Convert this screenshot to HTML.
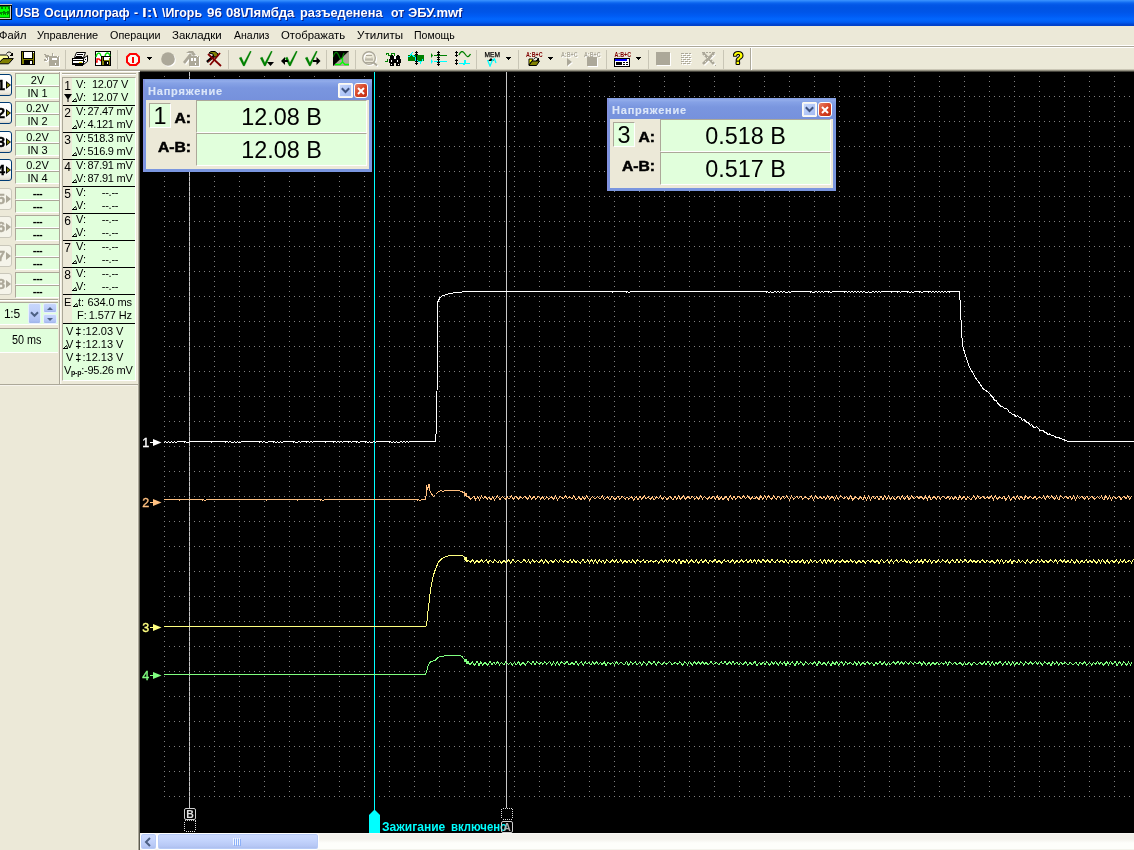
<!DOCTYPE html>
<html lang="ru"><head><meta charset="utf-8"><title>USB Осциллограф</title>
<style>

html,body{margin:0;padding:0}
body{width:1134px;height:850px;position:relative;overflow:hidden;background:#ECE9D8;
 font-family:"Liberation Sans",sans-serif;font-size:11px;color:#000;line-height:13px}
div,span,svg{box-sizing:border-box}
.a{position:absolute}
#root{position:absolute;left:0;top:0;width:1134px;height:850px;overflow:hidden;will-change:transform}
#title{position:absolute;left:0;top:0;width:1134px;height:26px;
 background:linear-gradient(to bottom,#3d95ff 0px,#2b86fb 1px,#0b64ee 3px,#0256e6 5px,#0054e3 8px,#0055e8 12px,#005cf4 16px,#0266fd 19px,#0262f8 21px,#0057ea 23px,#0046d4 24px,#0040c6 26px)}
#appicon{position:absolute;left:0;top:4px;width:12px;height:16px}
#titletext{position:absolute;left:15px;top:5px;height:16px;line-height:16px;font-size:13.5px;font-weight:bold;color:#fff;white-space:nowrap;
 text-shadow:1px 1px 0 #0a1f83;letter-spacing:-0.16px;transform-origin:0 0}
#menu{position:absolute;left:0;top:26px;width:1134px;height:19px;background:#ECE9D8}
.mi{position:absolute;top:2px;height:14px;line-height:14px;font-size:11px;white-space:nowrap;display:inline-block;transform-origin:0 0}
#tbline1{position:absolute;left:0;top:45px;width:1134px;height:1px;background:#fff}
#tbline2{position:absolute;left:0;top:46px;width:1134px;height:1px;background:#aca899}
#toolbar{position:absolute;left:0;top:47px;width:1134px;height:25px;background:#ECE9D8}
#tbshadow{position:absolute;left:0;top:69px;width:1134px;height:3px;background:linear-gradient(to bottom,#e0dccb 0,#b5b1a0 1px,#6e6c5f 2px,#1c1b18 3px)}
.sep{position:absolute;top:3px;width:1px;height:19px;background:#c5c2b2}
.ic{position:absolute;top:4px;width:16px;height:16px}
.dd{position:absolute;top:10px;width:5px;height:3px}

.tw{position:absolute;top:5px;height:16px;line-height:16px;font-size:13.5px;font-weight:bold;color:#fff;white-space:pre;text-shadow:1px 1px 0 #0a1f83;transform-origin:0 0}

</style></head>
<body>
<div id="root">

<div id="title"><div id="appicon"><svg width="12" height="16" viewBox="0 0 12 16" shape-rendering="crispEdges">
<rect x="0" y="0" width="12" height="1" fill="#c8c4b4"/><rect x="0" y="1" width="11" height="14" fill="#008000"/>
<rect x="10" y="2" width="1" height="12" fill="#d4d0c8"/><rect x="0" y="14" width="11" height="1" fill="#d4d0c8"/>
<rect x="11" y="1" width="1" height="15" fill="#000"/><rect x="0" y="15" width="12" height="1" fill="#000"/>
<rect x="0" y="1" width="11" height="1" fill="#000"/>
<rect x="0" y="5" width="9" height="2" fill="#00ff00"/><rect x="0" y="3" width="1" height="2" fill="#00ff00"/><rect x="3" y="3" width="2" height="2" fill="#00ff00"/><rect x="6" y="3" width="2" height="2" fill="#00ff00"/>
<rect x="0" y="7" width="3" height="1" fill="#00ff00"/><rect x="5" y="7" width="2" height="1" fill="#00ff00"/>
<rect x="0" y="11" width="9" height="2" fill="#00ff00"/>
<rect x="0" y="10" width="1" height="1" fill="#00ff00"/><rect x="2" y="9" width="1" height="2" fill="#00ff00"/><rect x="4" y="10" width="1" height="1" fill="#00ff00"/><rect x="6" y="9" width="1" height="2" fill="#00ff00"/><rect x="8" y="10" width="1" height="1" fill="#00ff00"/>
</svg></div><span class="tw" style="left:15.04px;transform:scaleX(0.863)">USB</span><span class="tw" style="left:43.98px;transform:scaleX(0.9207)">Осциллограф</span><span class="tw" style="left:133.88px;transform:scaleX(0.925)">-</span><span class="tw" style="left:142.23px;transform:scaleX(1.2727)">I:\</span><span class="tw" style="left:161.7px;transform:scaleX(0.9159)">\Игорь</span><span class="tw" style="left:207.11px;transform:scaleX(0.9857)">96</span><span class="tw" style="left:225.62px;transform:scaleX(0.9771)">08\Лямбда</span><span class="tw" style="left:300.15px;transform:scaleX(0.9483)">разъеденена</span><span class="tw" style="left:391.49px;transform:scaleX(0.9143)">от</span><span class="tw" style="left:408.24px;transform:scaleX(0.9643)">ЭБУ.mwf</span></div>
<div id="menu"><span class="mi" style="left:-1px;transform:scaleX(1.0154)">Файл</span><span class="mi" style="left:37.0px;transform:scaleX(1.0000)">Управление</span><span class="mi" style="left:110.02px;transform:scaleX(0.9800)">Операции</span><span class="mi" style="left:171.96px;transform:scaleX(1.0435)">Закладки</span><span class="mi" style="left:233.7px;transform:scaleX(0.9541)">Анализ</span><span class="mi" style="left:280.97px;transform:scaleX(1.0328)">Отображать</span><span class="mi" style="left:356.94px;transform:scaleX(1.0571)">Утилиты</span><span class="mi" style="left:413.64px;transform:scaleX(0.9610)">Помощь</span></div><div id="tbline1"></div><div id="tbline2"></div><div id="toolbar"></div>
<div class="a" style="left:0;top:47px;width:1134px;height:1px;background:#fff"></div>
<div id="tbshadow"></div>
<div class="a" style="left:750px;top:48px;width:1px;height:22px;background:#aca899"></div><div class="a" style="left:751px;top:48px;width:1px;height:22px;background:#fff"></div>
<svg class="a" style="left:0px;top:51px" width="16" height="14" viewBox="0 0 16 14" shape-rendering="crispEdges" ><path d="M-2 12.8 L3 7.6 L13.3 7.6 L8.6 12.8 Z" fill="#808000" stroke="#000" stroke-width="1" shape-rendering="geometricPrecision"/><path d="M-1 4 H6.5 L8.5 5.5 V7.6 H3 L-1 11.8 Z" fill="#ffff9a" stroke="#000" stroke-width="1" shape-rendering="geometricPrecision"/><path d="M6.5 2.5 C8 0.5 10.5 0.5 12 3" fill="none" stroke="#000" stroke-width="1" shape-rendering="geometricPrecision"/><path d="M13 1 V4.5 H9.5 Z" fill="#000" /></svg>
<svg class="a" style="left:21px;top:51px" width="14" height="14" viewBox="0 0 14 14" shape-rendering="crispEdges" ><rect x="0" y="0" width="14" height="14" fill="#000"/><rect x="1" y="1" width="12" height="12" fill="#808000"/><rect x="3" y="1" width="8" height="6" fill="#fff"/><rect x="2" y="1" width="1" height="7" fill="#000"/><rect x="11" y="1" width="1" height="7" fill="#000"/><rect x="2" y="7" width="10" height="1" fill="#000"/><rect x="12" y="1" width="1" height="1" fill="#fff"/><rect x="3" y="9" width="9" height="4" fill="#000"/><rect x="9" y="10" width="2" height="3" fill="#fff"/></svg>
<svg class="a" style="left:44px;top:53px" width="16" height="14" viewBox="0 0 16 14" shape-rendering="crispEdges" ><rect x="6" y="4" width="10" height="10" fill="#fff"/><rect x="1" y="2" width="2" height="1" fill="#fff"/><rect x="2" y="3" width="4" height="2" fill="#fff"/><rect x="7" y="2" width="1" height="4" fill="#fff"/><rect x="9" y="1" width="1" height="5" fill="#fff"/><rect x="3" y="5" width="2" height="3" fill="#fff"/><rect x="1" y="7" width="3" height="2" fill="#fff"/><rect x="5" y="3" width="10" height="10" fill="#aca899"/><rect x="0" y="1" width="2" height="1" fill="#aca899"/><rect x="1" y="2" width="4" height="2" fill="#aca899"/><rect x="6" y="1" width="1" height="4" fill="#aca899"/><rect x="8" y="0" width="1" height="5" fill="#aca899"/><rect x="2" y="4" width="2" height="3" fill="#aca899"/><rect x="0" y="6" width="3" height="2" fill="#aca899"/><rect x="8" y="5" width="5" height="2" fill="#fff"/><rect x="13" y="3" width="1" height="1" fill="#fff"/><rect x="11" y="10" width="1" height="2" fill="#fff"/><rect x="2" y="5" width="1" height="2" fill="#fff"/><rect x="6" y="0" width="2" height="3" fill="#ECE9D8"/></svg>
<div class="a" style="left:65px;top:50px;width:1px;height:19px;background:#c9c6b6"></div>
<svg class="a" style="left:72px;top:52px" width="17" height="15" viewBox="0 0 17 15" shape-rendering="crispEdges" ><path d="M4.5 0.5 H13.5 L11.5 5.5 H2.5 Z" fill="#fff" stroke="#000" stroke-width="1" shape-rendering="geometricPrecision"/><rect x="5" y="2" width="6" height="1" fill="#000"/><rect x="4" y="4" width="6" height="1" fill="#000"/><path d="M0.5 6.5 H11.5 V12.5 H0.5 Z" fill="#fff" stroke="#000" stroke-width="1" /><path d="M11.5 6.5 L15.5 3.5 V9.5 L11.5 12.5 Z" fill="#fff" stroke="#000" stroke-width="1" shape-rendering="geometricPrecision"/><rect x="1" y="8" width="10" height="1" fill="#000"/><rect x="7" y="10" width="3" height="1" fill="#e0e000"/><rect x="1" y="11" width="10" height="1" fill="#000"/><path d="M2.5 13.5 H10.5" fill="none" stroke="#000" stroke-width="1" /><rect x="12" y="5" width="1" height="1" fill="#000"/><rect x="13" y="7" width="1" height="1" fill="#000"/><rect x="12" y="9" width="1" height="1" fill="#000"/></svg>
<svg class="a" style="left:95px;top:51px" width="16" height="15" viewBox="0 0 16 15" shape-rendering="crispEdges" ><rect x="0" y="0" width="16" height="15" fill="#000"/><rect x="1" y="1" width="14" height="13" fill="#fff"/><path d="M1 6 C2 1 5 1 6 5" fill="none" stroke="#00dd00" stroke-width="1.4" shape-rendering="geometricPrecision"/><path d="M10 5 C11 1 14 1 15 5" fill="none" stroke="#00dd00" stroke-width="1.4" shape-rendering="geometricPrecision"/><path d="M1 11 H2 V8 H4 L6 10" fill="none" stroke="#ff0000" stroke-width="1.4" shape-rendering="geometricPrecision"/><rect x="6" y="5" width="10" height="10" fill="#000"/><rect x="7" y="6" width="8" height="8" fill="#808000"/><rect x="9" y="6" width="5" height="3" fill="#fff"/><rect x="8" y="6" width="1" height="4" fill="#000"/><rect x="14" y="6" width="1" height="1" fill="#fff"/><rect x="9" y="10" width="5" height="4" fill="#000"/><rect x="12" y="11" width="1" height="2" fill="#fff"/></svg>
<div class="a" style="left:117px;top:50px;width:1px;height:19px;background:#c9c6b6"></div>
<svg class="a" style="left:126px;top:53px" width="14" height="13" viewBox="0 0 14 13" shape-rendering="crispEdges" ><path d="M4 1 H10 L13 4 V9 L10 12 H4 L1 9 V4 Z" fill="#f8f8f0" stroke="#ff0000" stroke-width="2" shape-rendering="geometricPrecision"/><rect x="6" y="4" width="2" height="6" fill="#ff0000"/></svg>
<svg class="a" style="left:147px;top:57px" width="5" height="3" viewBox="0 0 5 3" shape-rendering="crispEdges" ><rect x="0" y="0" width="5" height="1" fill="#000"/><rect x="1" y="1" width="3" height="1" fill="#000"/><rect x="2" y="2" width="1" height="1" fill="#000"/></svg>
<svg class="a" style="left:161px;top:52px" width="16" height="16" viewBox="0 0 16 16" shape-rendering="crispEdges" ><circle cx="8" cy="8" r="6.8" fill="#fff" shape-rendering="geometricPrecision"/><circle cx="7" cy="7" r="6.8" fill="#aca899" shape-rendering="geometricPrecision"/></svg>
<svg class="a" style="left:183px;top:51px" width="17" height="16" viewBox="0 0 17 16" shape-rendering="crispEdges" ><rect x="7" y="6" width="10" height="10" fill="#fff"/><path d="M1 12 L8 3 L10 5 L3 14 Z" fill="#fff" shape-rendering="geometricPrecision"/><path d="M4 3 L7 1 H11 L14 5 L11 6 L9 3 Z" fill="#fff" shape-rendering="geometricPrecision"/><rect x="6" y="5" width="10" height="10" fill="#aca899"/><path d="M0 11 L7 2 L9 4 L2 13 Z" fill="#aca899" shape-rendering="geometricPrecision"/><path d="M3 2 L6 0 H10 L13 4 L10 5 L8 2 Z" fill="#aca899" shape-rendering="geometricPrecision"/><rect x="8" y="7" width="2" height="3" fill="#fff"/><rect x="11" y="7" width="2" height="3" fill="#fff"/><rect x="14" y="5" width="1" height="1" fill="#fff"/><rect x="12" y="12" width="1" height="2" fill="#fff"/></svg>
<svg class="a" style="left:206px;top:51px" width="16" height="16" viewBox="0 0 16 16" shape-rendering="crispEdges" ><path d="M1 11 L8 5" fill="none" stroke="#000" stroke-width="2.6" shape-rendering="geometricPrecision"/><path d="M2 11 L8 5.5" fill="none" stroke="#800000" stroke-width="1" shape-rendering="geometricPrecision"/><path d="M3 2 L5 0.5 H9 L12 3 L11 6 L8 6 L7 3 Z" fill="#808000" stroke="#000" stroke-width="1" shape-rendering="geometricPrecision"/><path d="M2 3 L15 15" fill="none" stroke="#800000" stroke-width="1.8" shape-rendering="geometricPrecision"/><path d="M14 2 L4 14" fill="none" stroke="#800000" stroke-width="1.8" shape-rendering="geometricPrecision"/></svg>
<div class="a" style="left:228px;top:50px;width:1px;height:19px;background:#c9c6b6"></div>
<svg class="a" style="left:239px;top:51px" width="14" height="16" viewBox="0 0 14 16" shape-rendering="crispEdges" ><path d="M0.2 6.9 L2.3 6.0 L4.9 11.8 L11.2 0 L12.3 0.5 L5.5 15 L4.3 15 Z" fill="#008000" stroke="#008000" stroke-width="0.25" shape-rendering="geometricPrecision"/></svg>
<svg class="a" style="left:260px;top:51px" width="15" height="16" viewBox="0 0 15 16" shape-rendering="crispEdges" ><path d="M0.2 6.9 L2.3 6.0 L4.9 11.8 L11.2 0 L12.3 0.5 L5.5 15 L4.3 15 Z" fill="#008000" stroke="#008000" stroke-width="0.25" shape-rendering="geometricPrecision"/><path d="M7 11 H14 L10.5 15 Z" fill="#000" shape-rendering="geometricPrecision"/></svg>
<svg class="a" style="left:281px;top:51px" width="17" height="16" viewBox="0 0 17 16" shape-rendering="crispEdges" ><path d="M4.2 6.9 L6.3 6.0 L8.9 11.8 L15.2 0 L16.3 0.5 L9.5 15 L8.3 15 Z" fill="#008000" stroke="#008000" stroke-width="0.25" shape-rendering="geometricPrecision"/><path d="M0 10 L4 6 V9 H7 V11 H4 V14 Z" fill="#000" shape-rendering="geometricPrecision"/></svg>
<svg class="a" style="left:305px;top:51px" width="16" height="16" viewBox="0 0 16 16" shape-rendering="crispEdges" ><path d="M0.2 6.9 L2.3 6.0 L4.9 11.8 L11.2 0 L12.3 0.5 L5.5 15 L4.3 15 Z" fill="#008000" stroke="#008000" stroke-width="0.25" shape-rendering="geometricPrecision"/><path d="M15.5 10 L11.5 6 V9 H8 V11 H11.5 V14 Z" fill="#000" shape-rendering="geometricPrecision"/></svg>
<div class="a" style="left:326px;top:50px;width:1px;height:19px;background:#c9c6b6"></div>
<svg class="a" style="left:333px;top:51px" width="16" height="15" viewBox="0 0 16 15" shape-rendering="crispEdges" ><rect x="0" y="0" width="16" height="15" fill="#aca899"/><path d="M0 0 H16 L0 15 Z" fill="#000" shape-rendering="geometricPrecision"/><path d="M0 6 C2 0 4 0 6 5 S 9 8 11 2" fill="none" stroke="#008000" stroke-width="1.2" shape-rendering="geometricPrecision"/><path d="M2 13.5 H7 L9.5 11 V7 M9.5 11 L12 13.5 H16" fill="none" stroke="#00ff00" stroke-width="1.4" shape-rendering="geometricPrecision"/></svg>
<div class="a" style="left:355px;top:50px;width:1px;height:19px;background:#c9c6b6"></div>
<svg class="a" style="left:362px;top:51px" width="17" height="17" viewBox="0 0 17 17" shape-rendering="crispEdges" ><g shape-rendering="geometricPrecision"><circle cx="8" cy="8" r="6.3" fill="none" stroke="#fff" stroke-width="1.6"/><circle cx="7" cy="7" r="6.3" fill="none" stroke="#aca899" stroke-width="1.4"/><path d="M12 12 L16 15.5" fill="none" stroke="#fff" stroke-width="2" /><path d="M11.5 11.5 L15 14.5" fill="none" stroke="#aca899" stroke-width="2" /><path d="M3 9 H11 M3 11.5 H11 M4 4.5 H10" fill="none" stroke="#aca899" stroke-width="1" /><path d="M4 9 V6.5 M6 9 V7 M8 9 V7 M10 9 V6.5" fill="none" stroke="#aca899" stroke-width="1" /></g></svg>
<svg class="a" style="left:385px;top:52px" width="16" height="14" viewBox="0 0 16 14" shape-rendering="crispEdges" ><path d="M1 3 V1 H3 V3 H6 V1 H9 V3 H10" fill="none" stroke="#008000" stroke-width="1" /><path d="M0 9.5 H3 M2 9 V7" fill="none" stroke="#008000" stroke-width="1" /><rect x="5" y="4" width="4" height="10" fill="#000"/><rect x="11" y="4" width="4" height="10" fill="#000"/><rect x="4" y="7" width="12" height="4" fill="#000"/><rect x="6" y="3" width="2" height="1" fill="#000"/><rect x="12" y="3" width="2" height="1" fill="#000"/><rect x="6" y="8" width="1" height="2" fill="#fff"/><rect x="12" y="8" width="1" height="2" fill="#fff"/><rect x="6" y="12" width="1" height="1" fill="#fff"/><rect x="13" y="12" width="1" height="1" fill="#fff"/><rect x="9" y="4" width="2" height="3" fill="#fff"/><rect x="9" y="11" width="2" height="3" fill="#ECE9D8"/></svg>
<svg class="a" style="left:408px;top:51px" width="16" height="14" viewBox="0 0 16 14" shape-rendering="crispEdges" ><rect x="0" y="4" width="16" height="6" fill="#008000"/><path d="M0 6 V5 H2 L4 2 V1 M4 4 L7 6 V9 L10 10 H12 V13 M12 10 H14 L15 8" fill="none" stroke="#00ffff" stroke-width="1" /><rect x="8" y="0" width="1" height="14" fill="#000"/><rect x="7" y="1" width="3" height="1" fill="#000"/><rect x="7" y="12" width="3" height="1" fill="#000"/><rect x="7" y="3" width="3" height="1" fill="#000"/><rect x="7" y="10" width="3" height="1" fill="#000"/></svg>
<svg class="a" style="left:431px;top:51px" width="16" height="15" viewBox="0 0 16 15" shape-rendering="crispEdges" ><rect x="3" y="4" width="13" height="1" fill="#008000"/><path d="M0 2 L2 4.5 L0 7 Z" fill="#008000" shape-rendering="geometricPrecision"/><rect x="3" y="10" width="13" height="1" fill="#00ffff"/><path d="M0 8 L2 10.5 L0 13 Z" fill="#00ffff" shape-rendering="geometricPrecision"/><rect x="7" y="0" width="1" height="15" fill="#000"/><rect x="6" y="1" width="3" height="1" fill="#000"/><rect x="6" y="3" width="3" height="1" fill="#000"/><rect x="6" y="6" width="3" height="1" fill="#000"/><rect x="6" y="8" width="3" height="1" fill="#000"/><rect x="6" y="11" width="3" height="1" fill="#000"/><rect x="6" y="13" width="3" height="1" fill="#000"/></svg>
<svg class="a" style="left:455px;top:51px" width="16" height="15" viewBox="0 0 16 15" shape-rendering="crispEdges" ><rect x="1" y="0" width="1" height="6" fill="#000"/><rect x="0" y="1" width="3" height="1" fill="#000"/><rect x="0" y="4" width="3" height="1" fill="#000"/><rect x="1" y="8" width="1" height="6" fill="#000"/><rect x="0" y="9" width="3" height="1" fill="#000"/><rect x="0" y="12" width="3" height="1" fill="#000"/><path d="M4 4 C6 -1 8 0 10 3 S 13 7 15.5 3" fill="none" stroke="#008000" stroke-width="1.3" shape-rendering="geometricPrecision"/><path d="M4 12.5 H8.5 V13.5 H9.5 V9.5 H10.5 V12.5 H15" fill="none" stroke="#00ffff" stroke-width="1" /></svg>
<div class="a" style="left:476px;top:50px;width:1px;height:19px;background:#c9c6b6"></div>
<svg class="a" style="left:484px;top:51px" width="17" height="16" viewBox="0 0 17 16" shape-rendering="crispEdges" ><text x="0.5" y="6" font-family="Liberation Sans, sans-serif" font-size="7.5" font-weight="bold" fill="#000" textLength="15.5" lengthAdjust="spacingAndGlyphs" style="font-weight:normal" stroke="#000" stroke-width="0.25">MEM</text><path d="M4 10 H10 L7 7 Z" fill="#000" shape-rendering="geometricPrecision"/><path d="M3.5 9 L6 15 L8.5 9 L10.5 8 L12 12" fill="none" stroke="#00ffff" stroke-width="1.3" shape-rendering="geometricPrecision"/></svg>
<svg class="a" style="left:506px;top:57px" width="5" height="3" viewBox="0 0 5 3" shape-rendering="crispEdges" ><rect x="0" y="0" width="5" height="1" fill="#000"/><rect x="1" y="1" width="3" height="1" fill="#000"/><rect x="2" y="2" width="1" height="1" fill="#000"/></svg>
<div class="a" style="left:518px;top:50px;width:1px;height:19px;background:#c9c6b6"></div>
<svg class="a" style="left:526px;top:51px" width="17" height="16" viewBox="0 0 17 16" shape-rendering="crispEdges" ><text x="0" y="6" font-family="Liberation Sans, sans-serif" font-size="7" font-weight="bold" fill="#800000" textLength="16.5" lengthAdjust="spacingAndGlyphs">A:B+C</text><path d="M3 14.5 L6 10 H13.5 L10.5 14.5 Z" fill="#808000" stroke="#000" stroke-width="1" shape-rendering="geometricPrecision"/><path d="M3 8 H7 V9.5 H6 L3 14 Z" fill="#ffff00" stroke="#000" stroke-width="1" shape-rendering="geometricPrecision"/><path d="M8 8 C9 6 11 6 12 8" fill="none" stroke="#000" stroke-width="1" shape-rendering="geometricPrecision"/><path d="M13 6 V9.5 H10 Z" fill="#000" /></svg>
<svg class="a" style="left:548px;top:57px" width="5" height="3" viewBox="0 0 5 3" shape-rendering="crispEdges" ><rect x="0" y="0" width="5" height="1" fill="#000"/><rect x="1" y="1" width="3" height="1" fill="#000"/><rect x="2" y="2" width="1" height="1" fill="#000"/></svg>
<svg class="a" style="left:561px;top:51px" width="18" height="17" viewBox="0 0 18 17" shape-rendering="crispEdges" ><text x="1" y="7" font-family="Liberation Sans, sans-serif" font-size="7" font-weight="bold" fill="#fff" textLength="16.5" lengthAdjust="spacingAndGlyphs">A:B+C</text><text x="0" y="6" font-family="Liberation Sans, sans-serif" font-size="7" font-weight="bold" fill="#aca899" textLength="16.5" lengthAdjust="spacingAndGlyphs">A:B+C</text><path d="M7 8 V16 L12 12 Z" fill="#fff" shape-rendering="geometricPrecision"/><path d="M6 7 V15 L11 11 Z" fill="#aca899" shape-rendering="geometricPrecision"/></svg>
<svg class="a" style="left:584px;top:51px" width="18" height="17" viewBox="0 0 18 17" shape-rendering="crispEdges" ><text x="1" y="7" font-family="Liberation Sans, sans-serif" font-size="7" font-weight="bold" fill="#fff" textLength="16.5" lengthAdjust="spacingAndGlyphs">A:B+C</text><text x="0" y="6" font-family="Liberation Sans, sans-serif" font-size="7" font-weight="bold" fill="#aca899" textLength="16.5" lengthAdjust="spacingAndGlyphs">A:B+C</text><rect x="4" y="7" width="10" height="9" fill="#fff"/><rect x="3" y="6" width="10" height="9" fill="#aca899"/></svg>
<div class="a" style="left:606px;top:50px;width:1px;height:19px;background:#c9c6b6"></div>
<svg class="a" style="left:614px;top:51px" width="17" height="16" viewBox="0 0 17 16" shape-rendering="crispEdges" ><text x="0.5" y="6" font-family="Liberation Sans, sans-serif" font-size="7" font-weight="bold" fill="#800000" textLength="16.5" lengthAdjust="spacingAndGlyphs">A:B+C</text><rect x="0" y="7" width="16" height="9" fill="#000"/><rect x="1" y="8" width="14" height="7" fill="#fff"/><rect x="1" y="8" width="12" height="2" fill="#0000ff"/><rect x="2" y="11" width="6" height="3" fill="#000"/><rect x="9" y="11" width="2" height="1" fill="#000"/><rect x="12" y="11" width="2" height="1" fill="#000"/><rect x="9" y="13" width="2" height="1" fill="#000"/><rect x="12" y="13" width="2" height="1" fill="#000"/></svg>
<svg class="a" style="left:636px;top:57px" width="5" height="3" viewBox="0 0 5 3" shape-rendering="crispEdges" ><rect x="0" y="0" width="5" height="1" fill="#000"/><rect x="1" y="1" width="3" height="1" fill="#000"/><rect x="2" y="2" width="1" height="1" fill="#000"/></svg>
<div class="a" style="left:648px;top:50px;width:1px;height:19px;background:#c9c6b6"></div>
<svg class="a" style="left:656px;top:52px" width="15" height="14" viewBox="0 0 15 14" shape-rendering="crispEdges" ><rect x="1" y="1" width="14" height="13" fill="#fff"/><rect x="0" y="0" width="14" height="13" fill="#aca899"/></svg>
<svg class="a" style="left:681px;top:52px" width="12" height="14" viewBox="0 0 12 14" shape-rendering="crispEdges" ><rect x="1" y="2" width="2" height="1" fill="#fff"/><rect x="0" y="1" width="2" height="1" fill="#aca899"/><rect x="3" y="2" width="1" height="1" fill="#fff"/><rect x="2" y="1" width="1" height="1" fill="#aca899"/><rect x="5" y="2" width="2" height="1" fill="#fff"/><rect x="4" y="1" width="2" height="1" fill="#aca899"/><rect x="7" y="2" width="1" height="1" fill="#fff"/><rect x="6" y="1" width="1" height="1" fill="#aca899"/><rect x="9" y="2" width="2" height="1" fill="#fff"/><rect x="8" y="1" width="2" height="1" fill="#aca899"/><rect x="1" y="4" width="1" height="1" fill="#fff"/><rect x="0" y="3" width="1" height="1" fill="#aca899"/><rect x="3" y="4" width="2" height="1" fill="#fff"/><rect x="2" y="3" width="2" height="1" fill="#aca899"/><rect x="5" y="4" width="1" height="1" fill="#fff"/><rect x="4" y="3" width="1" height="1" fill="#aca899"/><rect x="7" y="4" width="2" height="1" fill="#fff"/><rect x="6" y="3" width="2" height="1" fill="#aca899"/><rect x="9" y="4" width="1" height="1" fill="#fff"/><rect x="8" y="3" width="1" height="1" fill="#aca899"/><rect x="1" y="6" width="2" height="1" fill="#fff"/><rect x="0" y="5" width="2" height="1" fill="#aca899"/><rect x="3" y="6" width="1" height="1" fill="#fff"/><rect x="2" y="5" width="1" height="1" fill="#aca899"/><rect x="5" y="6" width="2" height="1" fill="#fff"/><rect x="4" y="5" width="2" height="1" fill="#aca899"/><rect x="7" y="6" width="1" height="1" fill="#fff"/><rect x="6" y="5" width="1" height="1" fill="#aca899"/><rect x="9" y="6" width="2" height="1" fill="#fff"/><rect x="8" y="5" width="2" height="1" fill="#aca899"/><rect x="1" y="8" width="1" height="1" fill="#fff"/><rect x="0" y="7" width="1" height="1" fill="#aca899"/><rect x="3" y="8" width="2" height="1" fill="#fff"/><rect x="2" y="7" width="2" height="1" fill="#aca899"/><rect x="5" y="8" width="1" height="1" fill="#fff"/><rect x="4" y="7" width="1" height="1" fill="#aca899"/><rect x="7" y="8" width="2" height="1" fill="#fff"/><rect x="6" y="7" width="2" height="1" fill="#aca899"/><rect x="9" y="8" width="1" height="1" fill="#fff"/><rect x="8" y="7" width="1" height="1" fill="#aca899"/><rect x="1" y="10" width="2" height="1" fill="#fff"/><rect x="0" y="9" width="2" height="1" fill="#aca899"/><rect x="3" y="10" width="1" height="1" fill="#fff"/><rect x="2" y="9" width="1" height="1" fill="#aca899"/><rect x="5" y="10" width="2" height="1" fill="#fff"/><rect x="4" y="9" width="2" height="1" fill="#aca899"/><rect x="7" y="10" width="1" height="1" fill="#fff"/><rect x="6" y="9" width="1" height="1" fill="#aca899"/><rect x="9" y="10" width="2" height="1" fill="#fff"/><rect x="8" y="9" width="2" height="1" fill="#aca899"/><rect x="1" y="12" width="1" height="1" fill="#fff"/><rect x="0" y="11" width="1" height="1" fill="#aca899"/><rect x="3" y="12" width="2" height="1" fill="#fff"/><rect x="2" y="11" width="2" height="1" fill="#aca899"/><rect x="5" y="12" width="1" height="1" fill="#fff"/><rect x="4" y="11" width="1" height="1" fill="#aca899"/><rect x="7" y="12" width="2" height="1" fill="#fff"/><rect x="6" y="11" width="2" height="1" fill="#aca899"/><rect x="9" y="12" width="1" height="1" fill="#fff"/><rect x="8" y="11" width="1" height="1" fill="#aca899"/></svg>
<svg class="a" style="left:702px;top:52px" width="15" height="15" viewBox="0 0 15 15" shape-rendering="crispEdges" ><g shape-rendering="geometricPrecision"><path d="M2 2 L13 13 M13 2 L2 13" fill="none" stroke="#fff" stroke-width="2.6" /><path d="M1 1 L12 12 M12 1 L1 12" fill="none" stroke="#aca899" stroke-width="2.8" /></g><rect x="0" y="0" width="13" height="1" fill="#aca899"/><rect x="13" y="13" width="1" height="1" fill="#aca899"/><rect x="3" y="0" width="1" height="1" fill="#ECE9D8"/><rect x="6" y="0" width="1" height="1" fill="#ECE9D8"/><rect x="9" y="0" width="1" height="1" fill="#ECE9D8"/><rect x="2" y="3" width="1" height="1" fill="#ECE9D8"/><rect x="10" y="3" width="1" height="1" fill="#ECE9D8"/><rect x="5" y="5" width="1" height="1" fill="#ECE9D8"/><rect x="8" y="7" width="1" height="1" fill="#ECE9D8"/><rect x="3" y="9" width="1" height="1" fill="#ECE9D8"/><rect x="10" y="9" width="1" height="1" fill="#ECE9D8"/><rect x="6" y="11" width="1" height="1" fill="#ECE9D8"/><rect x="2" y="12" width="1" height="1" fill="#ECE9D8"/><rect x="11" y="12" width="1" height="1" fill="#ECE9D8"/><rect x="6" y="2" width="1" height="1" fill="#ECE9D8"/><rect x="7" y="9" width="1" height="1" fill="#ECE9D8"/></svg>
<div class="a" style="left:723px;top:50px;width:1px;height:19px;background:#c9c6b6"></div>
<svg class="a" style="left:733px;top:50px" width="13" height="17" viewBox="0 0 13 17" shape-rendering="crispEdges" ><text x="0" y="13.5" font-family="Liberation Sans, sans-serif" font-size="17" font-weight="bold" fill="#000" stroke="#000" stroke-width="2.2" stroke-linejoin="round" shape-rendering="geometricPrecision">?</text><text x="0" y="13.5" font-family="Liberation Sans, sans-serif" font-size="17" font-weight="bold" fill="#ffff00" shape-rendering="geometricPrecision">?</text></svg>
<div class="a" style="left:0px;top:72px;width:140px;height:778px;background:#ECE9D8"></div>
<div class="a" style="left:0px;top:70px;width:140px;height:1px;background:#aca899"></div>
<div class="a" style="left:0px;top:71px;width:140px;height:1px;background:#fff"></div>
<div class="a" style="left:137px;top:72px;width:1px;height:778px;background:#f1eee0"></div>
<div class="a" style="left:138px;top:72px;width:1px;height:778px;background:#aca899"></div>
<div class="a" style="left:139px;top:72px;width:1px;height:778px;background:#5b5a4f"></div>
<div class="a" style="left:15px;top:73px;width:45px;height:13px;background:#e1ffdc;border-top:1px solid #aca899;border-left:1px solid #aca899;border-bottom:1px solid #fff;border-right:1px solid #fff;text-align:center;font-size:11px;line-height:11px;padding-top:1px;white-space:nowrap">2V</div>
<div class="a" style="left:15px;top:86px;width:45px;height:13px;background:#e1ffdc;border-top:1px solid #aca899;border-left:1px solid #aca899;border-bottom:1px solid #fff;border-right:1px solid #fff;text-align:center;font-size:11px;line-height:11px;padding-top:1px;white-space:nowrap">IN 1</div>
<div class="a" style="left:-11px;top:74px;width:23px;height:22px;border:1px solid #003c74;border-radius:3px;background:linear-gradient(to bottom,#fff 0,#fbfbf8 60%,#ece9dd 90%,#d6d0c5 100%)"><span class="a" style="left:7px;top:3px;font-size:14.5px;line-height:14px;font-weight:bold;-webkit-text-stroke:0.4px #000;color:#000">1</span><svg class="a" style="left:16px;top:6px" width="5" height="8" viewBox="0 0 5 8"><path d="M0 0 L5 4 L0 8 Z" fill="#000"/><path d="M1 2 L4 4 L1 6.3 Z" fill="#808000"/></svg></div>
<div class="a" style="left:15px;top:101px;width:45px;height:13px;background:#e1ffdc;border-top:1px solid #aca899;border-left:1px solid #aca899;border-bottom:1px solid #fff;border-right:1px solid #fff;text-align:center;font-size:11px;line-height:11px;padding-top:1px;white-space:nowrap">0.2V</div>
<div class="a" style="left:15px;top:114px;width:45px;height:13px;background:#e1ffdc;border-top:1px solid #aca899;border-left:1px solid #aca899;border-bottom:1px solid #fff;border-right:1px solid #fff;text-align:center;font-size:11px;line-height:11px;padding-top:1px;white-space:nowrap">IN 2</div>
<div class="a" style="left:-11px;top:102px;width:23px;height:22px;border:1px solid #003c74;border-radius:3px;background:linear-gradient(to bottom,#fff 0,#fbfbf8 60%,#ece9dd 90%,#d6d0c5 100%)"><span class="a" style="left:7px;top:3px;font-size:14.5px;line-height:14px;font-weight:bold;-webkit-text-stroke:0.4px #000;color:#000">2</span><svg class="a" style="left:16px;top:6px" width="5" height="8" viewBox="0 0 5 8"><path d="M0 0 L5 4 L0 8 Z" fill="#000"/><path d="M1 2 L4 4 L1 6.3 Z" fill="#808000"/></svg></div>
<div class="a" style="left:15px;top:130px;width:45px;height:13px;background:#e1ffdc;border-top:1px solid #aca899;border-left:1px solid #aca899;border-bottom:1px solid #fff;border-right:1px solid #fff;text-align:center;font-size:11px;line-height:11px;padding-top:1px;white-space:nowrap">0.2V</div>
<div class="a" style="left:15px;top:143px;width:45px;height:13px;background:#e1ffdc;border-top:1px solid #aca899;border-left:1px solid #aca899;border-bottom:1px solid #fff;border-right:1px solid #fff;text-align:center;font-size:11px;line-height:11px;padding-top:1px;white-space:nowrap">IN 3</div>
<div class="a" style="left:-11px;top:131px;width:23px;height:22px;border:1px solid #003c74;border-radius:3px;background:linear-gradient(to bottom,#fff 0,#fbfbf8 60%,#ece9dd 90%,#d6d0c5 100%)"><span class="a" style="left:7px;top:3px;font-size:14.5px;line-height:14px;font-weight:bold;-webkit-text-stroke:0.4px #000;color:#000">3</span><svg class="a" style="left:16px;top:6px" width="5" height="8" viewBox="0 0 5 8"><path d="M0 0 L5 4 L0 8 Z" fill="#000"/><path d="M1 2 L4 4 L1 6.3 Z" fill="#808000"/></svg></div>
<div class="a" style="left:15px;top:158px;width:45px;height:13px;background:#e1ffdc;border-top:1px solid #aca899;border-left:1px solid #aca899;border-bottom:1px solid #fff;border-right:1px solid #fff;text-align:center;font-size:11px;line-height:11px;padding-top:1px;white-space:nowrap">0.2V</div>
<div class="a" style="left:15px;top:171px;width:45px;height:13px;background:#e1ffdc;border-top:1px solid #aca899;border-left:1px solid #aca899;border-bottom:1px solid #fff;border-right:1px solid #fff;text-align:center;font-size:11px;line-height:11px;padding-top:1px;white-space:nowrap">IN 4</div>
<div class="a" style="left:-11px;top:159px;width:23px;height:22px;border:1px solid #003c74;border-radius:3px;background:linear-gradient(to bottom,#fff 0,#fbfbf8 60%,#ece9dd 90%,#d6d0c5 100%)"><span class="a" style="left:7px;top:3px;font-size:14.5px;line-height:14px;font-weight:bold;-webkit-text-stroke:0.4px #000;color:#000">4</span><svg class="a" style="left:16px;top:6px" width="5" height="8" viewBox="0 0 5 8"><path d="M0 0 L5 4 L0 8 Z" fill="#000"/><path d="M1 2 L4 4 L1 6.3 Z" fill="#808000"/></svg></div>
<div class="a" style="left:15px;top:187px;width:45px;height:13px;background:#e1ffdc;border-top:1px solid #aca899;border-left:1px solid #aca899;border-bottom:1px solid #fff;border-right:1px solid #fff;text-align:center;font-size:11px;line-height:11px;padding-top:1px;white-space:nowrap"><span style="font-weight:bold;position:relative;top:-1px;letter-spacing:-0.5px">---</span></div>
<div class="a" style="left:15px;top:200px;width:45px;height:13px;background:#e1ffdc;border-top:1px solid #aca899;border-left:1px solid #aca899;border-bottom:1px solid #fff;border-right:1px solid #fff;text-align:center;font-size:11px;line-height:11px;padding-top:1px;white-space:nowrap"><span style="font-weight:bold;position:relative;top:-1px;letter-spacing:-0.5px">---</span></div>
<div class="a" style="left:-11px;top:188px;width:23px;height:22px;border:1px solid #c9c7ba;border-radius:3px;background:#f5f4ea"><span class="a" style="left:7px;top:3px;font-size:14.5px;line-height:14px;font-weight:bold;-webkit-text-stroke:0.4px #aca899;color:#aca899">5</span><svg class="a" style="left:16px;top:6px" width="5" height="8" viewBox="0 0 5 8"><path d="M0 0 L5 4 L0 8 Z" fill="#aca899"/><path d="M1 2 L4 4 L1 6.3 Z" fill="#aca899"/></svg></div>
<div class="a" style="left:15px;top:215px;width:45px;height:13px;background:#e1ffdc;border-top:1px solid #aca899;border-left:1px solid #aca899;border-bottom:1px solid #fff;border-right:1px solid #fff;text-align:center;font-size:11px;line-height:11px;padding-top:1px;white-space:nowrap"><span style="font-weight:bold;position:relative;top:-1px;letter-spacing:-0.5px">---</span></div>
<div class="a" style="left:15px;top:228px;width:45px;height:13px;background:#e1ffdc;border-top:1px solid #aca899;border-left:1px solid #aca899;border-bottom:1px solid #fff;border-right:1px solid #fff;text-align:center;font-size:11px;line-height:11px;padding-top:1px;white-space:nowrap"><span style="font-weight:bold;position:relative;top:-1px;letter-spacing:-0.5px">---</span></div>
<div class="a" style="left:-11px;top:216px;width:23px;height:22px;border:1px solid #c9c7ba;border-radius:3px;background:#f5f4ea"><span class="a" style="left:7px;top:3px;font-size:14.5px;line-height:14px;font-weight:bold;-webkit-text-stroke:0.4px #aca899;color:#aca899">6</span><svg class="a" style="left:16px;top:6px" width="5" height="8" viewBox="0 0 5 8"><path d="M0 0 L5 4 L0 8 Z" fill="#aca899"/><path d="M1 2 L4 4 L1 6.3 Z" fill="#aca899"/></svg></div>
<div class="a" style="left:15px;top:244px;width:45px;height:13px;background:#e1ffdc;border-top:1px solid #aca899;border-left:1px solid #aca899;border-bottom:1px solid #fff;border-right:1px solid #fff;text-align:center;font-size:11px;line-height:11px;padding-top:1px;white-space:nowrap"><span style="font-weight:bold;position:relative;top:-1px;letter-spacing:-0.5px">---</span></div>
<div class="a" style="left:15px;top:257px;width:45px;height:13px;background:#e1ffdc;border-top:1px solid #aca899;border-left:1px solid #aca899;border-bottom:1px solid #fff;border-right:1px solid #fff;text-align:center;font-size:11px;line-height:11px;padding-top:1px;white-space:nowrap"><span style="font-weight:bold;position:relative;top:-1px;letter-spacing:-0.5px">---</span></div>
<div class="a" style="left:-11px;top:245px;width:23px;height:22px;border:1px solid #c9c7ba;border-radius:3px;background:#f5f4ea"><span class="a" style="left:7px;top:3px;font-size:14.5px;line-height:14px;font-weight:bold;-webkit-text-stroke:0.4px #aca899;color:#aca899">7</span><svg class="a" style="left:16px;top:6px" width="5" height="8" viewBox="0 0 5 8"><path d="M0 0 L5 4 L0 8 Z" fill="#aca899"/><path d="M1 2 L4 4 L1 6.3 Z" fill="#aca899"/></svg></div>
<div class="a" style="left:15px;top:272px;width:45px;height:13px;background:#e1ffdc;border-top:1px solid #aca899;border-left:1px solid #aca899;border-bottom:1px solid #fff;border-right:1px solid #fff;text-align:center;font-size:11px;line-height:11px;padding-top:1px;white-space:nowrap"><span style="font-weight:bold;position:relative;top:-1px;letter-spacing:-0.5px">---</span></div>
<div class="a" style="left:15px;top:285px;width:45px;height:13px;background:#e1ffdc;border-top:1px solid #aca899;border-left:1px solid #aca899;border-bottom:1px solid #fff;border-right:1px solid #fff;text-align:center;font-size:11px;line-height:11px;padding-top:1px;white-space:nowrap"><span style="font-weight:bold;position:relative;top:-1px;letter-spacing:-0.5px">---</span></div>
<div class="a" style="left:-11px;top:273px;width:23px;height:22px;border:1px solid #c9c7ba;border-radius:3px;background:#f5f4ea"><span class="a" style="left:7px;top:3px;font-size:14.5px;line-height:14px;font-weight:bold;-webkit-text-stroke:0.4px #aca899;color:#aca899">8</span><svg class="a" style="left:16px;top:6px" width="5" height="8" viewBox="0 0 5 8"><path d="M0 0 L5 4 L0 8 Z" fill="#aca899"/><path d="M1 2 L4 4 L1 6.3 Z" fill="#aca899"/></svg></div>
<div class="a" style="left:0px;top:299px;width:58px;height:1px;background:#aca899"></div>
<div class="a" style="left:0px;top:300px;width:58px;height:1px;background:#fff"></div>
<div class="a" style="left:-2px;top:302px;width:60px;height:23px;background:#e1ffdc;border-top:1px solid #aca899;border-bottom:1px solid #fff"><span class="a" style="left:6px;top:4px;font-size:12px;line-height:14px;letter-spacing:-0.3px;white-space:nowrap">1:5</span></div>
<div class="a" style="left:28px;top:303px;width:13px;height:21px;border:1px solid #e8effd;border-radius:2px;background:linear-gradient(to bottom,#c8d7fc 0,#bccdf9 50%,#aec1f3 85%,#9fb4ea 100%)"><svg class="a" style="left:1px;top:7px" width="9" height="7" viewBox="0 0 9 7"><path d="M1 1.2 L4.5 4.8 L8 1.2" fill="none" stroke="#4d6185" stroke-width="2"/></svg></div>
<div class="a" style="left:43px;top:303px;width:14px;height:10px;border:1px solid #e8effd;border-radius:2px;background:linear-gradient(to bottom,#c8d7fc 0,#bccdf9 50%,#aec1f3 85%,#9fb4ea 100%)"><svg class="a" style="left:3px;top:2px" width="6" height="4" viewBox="0 0 6 4"><path d="M0 4 L3 1 L6 4 Z" fill="#4d6185"/></svg></div>
<div class="a" style="left:43px;top:314px;width:14px;height:10px;border:1px solid #e8effd;border-radius:2px;background:linear-gradient(to bottom,#c8d7fc 0,#bccdf9 50%,#aec1f3 85%,#9fb4ea 100%)"><svg class="a" style="left:3px;top:3px" width="6" height="4" viewBox="0 0 6 4"><path d="M0 0 L3 3 L6 0 Z" fill="#4d6185"/></svg></div>
<div class="a" style="left:-2px;top:328px;width:60px;height:25px;background:#e1ffdc;border-top:1px solid #aca899;border-bottom:1px solid #fff"><span class="a" style="left:13.5px;top:4px;font-size:12px;line-height:14px;white-space:nowrap;transform-origin:0 0;transform:scaleX(0.9)">50 ms</span></div>
<div class="a" style="left:0px;top:384px;width:138px;height:1px;background:#aca899"></div>
<div class="a" style="left:0px;top:385px;width:137px;height:1px;background:#f6f4ec"></div>
<div class="a" style="left:59px;top:72px;width:1px;height:312px;background:#aca899"></div>
<div class="a" style="left:60px;top:72px;width:1px;height:312px;background:#fbfaf3"></div>
<div class="a" style="left:61px;top:72px;width:1px;height:312px;background:#f2efe2"></div>
<div class="a" style="left:62px;top:73px;width:74px;height:1px;background:#aca899"></div>
<div class="a" style="left:62px;top:74px;width:74px;height:1px;background:#fff"></div>
<div class="a" style="left:62px;top:77px;width:74px;height:304px;border-top:1px solid #aca899;border-left:1px solid #aca899;border-bottom:1px solid #fff;border-right:1px solid #fff;background:#e1ffdc"></div>
<div class="a" style="left:63px;top:78px;width:9px;height:245px;background:#ECE9D8"></div>
<div class="a" style="left:63px;top:105px;width:72px;height:1px;background:#000"></div>
<div class="a" style="left:63px;top:80px;width:9px;height:13px;font-size:12px;line-height:13px;text-align:center">1</div>
<div class="a" style="left:76px;top:78px;width:12px;height:13px;font-size:11px;line-height:13px;white-space:nowrap">V:</div>
<div class="a" style="left:76px;top:91px;width:12px;height:13px;font-size:11px;line-height:13px;white-space:nowrap">V:</div>
<svg class="a" style="left:72px;top:98px" width="5" height="4" viewBox="0 0 5 4" shape-rendering="crispEdges"><path d="M0 4 H5 L3.5 0.5 Z" fill="none" stroke="#000" stroke-width="0.9" shape-rendering="geometricPrecision"/><rect x="0" y="3" width="5" height="1" fill="#000"/></svg><div class="a" style="left:85px;top:78px;width:50px;height:13px;font-size:11px;line-height:13px;text-align:center;white-space:nowrap;letter-spacing:-0.25px">12.07 V</div>
<div class="a" style="left:85px;top:91px;width:50px;height:13px;font-size:11px;line-height:13px;text-align:center;white-space:nowrap;letter-spacing:-0.25px">12.07 V</div>
<div class="a" style="left:63px;top:132px;width:72px;height:1px;background:#000"></div>
<div class="a" style="left:63px;top:107px;width:9px;height:13px;font-size:12px;line-height:13px;text-align:center">2</div>
<div class="a" style="left:76px;top:105px;width:12px;height:13px;font-size:11px;line-height:13px;white-space:nowrap">V:</div>
<div class="a" style="left:76px;top:118px;width:12px;height:13px;font-size:11px;line-height:13px;white-space:nowrap">V:</div>
<svg class="a" style="left:72px;top:125px" width="5" height="4" viewBox="0 0 5 4" shape-rendering="crispEdges"><path d="M0 4 H5 L3.5 0.5 Z" fill="none" stroke="#000" stroke-width="0.9" shape-rendering="geometricPrecision"/><rect x="0" y="3" width="5" height="1" fill="#000"/></svg><div class="a" style="left:85px;top:105px;width:50px;height:13px;font-size:11px;line-height:13px;text-align:center;white-space:nowrap;letter-spacing:-0.25px">27.47 mV</div>
<div class="a" style="left:85px;top:118px;width:50px;height:13px;font-size:11px;line-height:13px;text-align:center;white-space:nowrap;letter-spacing:-0.25px">4.121 mV</div>
<div class="a" style="left:63px;top:159px;width:72px;height:1px;background:#000"></div>
<div class="a" style="left:63px;top:134px;width:9px;height:13px;font-size:12px;line-height:13px;text-align:center">3</div>
<div class="a" style="left:76px;top:132px;width:12px;height:13px;font-size:11px;line-height:13px;white-space:nowrap">V:</div>
<div class="a" style="left:76px;top:145px;width:12px;height:13px;font-size:11px;line-height:13px;white-space:nowrap">V:</div>
<svg class="a" style="left:72px;top:152px" width="5" height="4" viewBox="0 0 5 4" shape-rendering="crispEdges"><path d="M0 4 H5 L3.5 0.5 Z" fill="none" stroke="#000" stroke-width="0.9" shape-rendering="geometricPrecision"/><rect x="0" y="3" width="5" height="1" fill="#000"/></svg><div class="a" style="left:85px;top:132px;width:50px;height:13px;font-size:11px;line-height:13px;text-align:center;white-space:nowrap;letter-spacing:-0.25px">518.3 mV</div>
<div class="a" style="left:85px;top:145px;width:50px;height:13px;font-size:11px;line-height:13px;text-align:center;white-space:nowrap;letter-spacing:-0.25px">516.9 mV</div>
<div class="a" style="left:63px;top:186px;width:72px;height:1px;background:#000"></div>
<div class="a" style="left:63px;top:161px;width:9px;height:13px;font-size:12px;line-height:13px;text-align:center">4</div>
<div class="a" style="left:76px;top:159px;width:12px;height:13px;font-size:11px;line-height:13px;white-space:nowrap">V:</div>
<div class="a" style="left:76px;top:172px;width:12px;height:13px;font-size:11px;line-height:13px;white-space:nowrap">V:</div>
<svg class="a" style="left:72px;top:179px" width="5" height="4" viewBox="0 0 5 4" shape-rendering="crispEdges"><path d="M0 4 H5 L3.5 0.5 Z" fill="none" stroke="#000" stroke-width="0.9" shape-rendering="geometricPrecision"/><rect x="0" y="3" width="5" height="1" fill="#000"/></svg><div class="a" style="left:85px;top:159px;width:50px;height:13px;font-size:11px;line-height:13px;text-align:center;white-space:nowrap;letter-spacing:-0.25px">87.91 mV</div>
<div class="a" style="left:85px;top:172px;width:50px;height:13px;font-size:11px;line-height:13px;text-align:center;white-space:nowrap;letter-spacing:-0.25px">87.91 mV</div>
<div class="a" style="left:63px;top:213px;width:72px;height:1px;background:#000"></div>
<div class="a" style="left:63px;top:188px;width:9px;height:13px;font-size:12px;line-height:13px;text-align:center">5</div>
<div class="a" style="left:76px;top:186px;width:12px;height:13px;font-size:11px;line-height:13px;white-space:nowrap">V:</div>
<div class="a" style="left:76px;top:199px;width:12px;height:13px;font-size:11px;line-height:13px;white-space:nowrap">V:</div>
<svg class="a" style="left:72px;top:206px" width="5" height="4" viewBox="0 0 5 4" shape-rendering="crispEdges"><path d="M0 4 H5 L3.5 0.5 Z" fill="none" stroke="#000" stroke-width="0.9" shape-rendering="geometricPrecision"/><rect x="0" y="3" width="5" height="1" fill="#000"/></svg><div class="a" style="left:85px;top:186px;width:50px;height:13px;font-size:11px;line-height:13px;text-align:center;white-space:nowrap;letter-spacing:-0.25px">--.--</div>
<div class="a" style="left:85px;top:199px;width:50px;height:13px;font-size:11px;line-height:13px;text-align:center;white-space:nowrap;letter-spacing:-0.25px">--.--</div>
<div class="a" style="left:63px;top:240px;width:72px;height:1px;background:#000"></div>
<div class="a" style="left:63px;top:215px;width:9px;height:13px;font-size:12px;line-height:13px;text-align:center">6</div>
<div class="a" style="left:76px;top:213px;width:12px;height:13px;font-size:11px;line-height:13px;white-space:nowrap">V:</div>
<div class="a" style="left:76px;top:226px;width:12px;height:13px;font-size:11px;line-height:13px;white-space:nowrap">V:</div>
<svg class="a" style="left:72px;top:233px" width="5" height="4" viewBox="0 0 5 4" shape-rendering="crispEdges"><path d="M0 4 H5 L3.5 0.5 Z" fill="none" stroke="#000" stroke-width="0.9" shape-rendering="geometricPrecision"/><rect x="0" y="3" width="5" height="1" fill="#000"/></svg><div class="a" style="left:85px;top:213px;width:50px;height:13px;font-size:11px;line-height:13px;text-align:center;white-space:nowrap;letter-spacing:-0.25px">--.--</div>
<div class="a" style="left:85px;top:226px;width:50px;height:13px;font-size:11px;line-height:13px;text-align:center;white-space:nowrap;letter-spacing:-0.25px">--.--</div>
<div class="a" style="left:63px;top:267px;width:72px;height:1px;background:#000"></div>
<div class="a" style="left:63px;top:242px;width:9px;height:13px;font-size:12px;line-height:13px;text-align:center">7</div>
<div class="a" style="left:76px;top:240px;width:12px;height:13px;font-size:11px;line-height:13px;white-space:nowrap">V:</div>
<div class="a" style="left:76px;top:253px;width:12px;height:13px;font-size:11px;line-height:13px;white-space:nowrap">V:</div>
<svg class="a" style="left:72px;top:260px" width="5" height="4" viewBox="0 0 5 4" shape-rendering="crispEdges"><path d="M0 4 H5 L3.5 0.5 Z" fill="none" stroke="#000" stroke-width="0.9" shape-rendering="geometricPrecision"/><rect x="0" y="3" width="5" height="1" fill="#000"/></svg><div class="a" style="left:85px;top:240px;width:50px;height:13px;font-size:11px;line-height:13px;text-align:center;white-space:nowrap;letter-spacing:-0.25px">--.--</div>
<div class="a" style="left:85px;top:253px;width:50px;height:13px;font-size:11px;line-height:13px;text-align:center;white-space:nowrap;letter-spacing:-0.25px">--.--</div>
<div class="a" style="left:63px;top:294px;width:72px;height:1px;background:#000"></div>
<div class="a" style="left:63px;top:269px;width:9px;height:13px;font-size:12px;line-height:13px;text-align:center">8</div>
<div class="a" style="left:76px;top:267px;width:12px;height:13px;font-size:11px;line-height:13px;white-space:nowrap">V:</div>
<div class="a" style="left:76px;top:280px;width:12px;height:13px;font-size:11px;line-height:13px;white-space:nowrap">V:</div>
<svg class="a" style="left:72px;top:287px" width="5" height="4" viewBox="0 0 5 4" shape-rendering="crispEdges"><path d="M0 4 H5 L3.5 0.5 Z" fill="none" stroke="#000" stroke-width="0.9" shape-rendering="geometricPrecision"/><rect x="0" y="3" width="5" height="1" fill="#000"/></svg><div class="a" style="left:85px;top:267px;width:50px;height:13px;font-size:11px;line-height:13px;text-align:center;white-space:nowrap;letter-spacing:-0.25px">--.--</div>
<div class="a" style="left:85px;top:280px;width:50px;height:13px;font-size:11px;line-height:13px;text-align:center;white-space:nowrap;letter-spacing:-0.25px">--.--</div>
<svg class="a" style="left:64px;top:94px" width="8" height="8" viewBox="0 0 8 8" shape-rendering="crispEdges"><path d="M0 0 H8 L4.5 5 V8 H3.5 V5 Z" fill="#000" shape-rendering="geometricPrecision"/></svg><div class="a" style="left:63px;top:323px;width:72px;height:1px;background:#000"></div>
<div class="a" style="left:64px;top:296px;width:8px;height:13px;font-size:11px;line-height:13px">E</div>
<svg class="a" style="left:73px;top:303px" width="5" height="4" viewBox="0 0 5 4" shape-rendering="crispEdges"><path d="M0 4 H5 L3.5 0.5 Z" fill="none" stroke="#000" stroke-width="0.9" shape-rendering="geometricPrecision"/><rect x="0" y="3" width="5" height="1" fill="#000"/></svg><div class="a" style="left:78px;top:296px;width:8px;height:13px;font-size:11px;line-height:13px;white-space:nowrap">t:</div>
<div class="a" style="left:84px;top:296px;width:48px;height:13px;font-size:11px;line-height:13px;text-align:right;white-space:nowrap;letter-spacing:-0.1px">634.0 ms</div>
<div class="a" style="left:77px;top:309px;width:10px;height:13px;font-size:11px;line-height:13px;white-space:nowrap">F:</div>
<div class="a" style="left:84px;top:309px;width:48px;height:13px;font-size:11px;line-height:13px;text-align:right;white-space:nowrap;letter-spacing:-0.1px">1.577 Hz</div>
<div class="a" style="left:66px;top:325px;width:70px;height:13px;font-size:11px;line-height:13px;white-space:nowrap">V<b style="font-size:11px;margin:0 1px 0 2px">&#8225;</b>:12.03 V</div>
<div class="a" style="left:66px;top:338px;width:70px;height:13px;font-size:11px;line-height:13px;white-space:nowrap">V<b style="font-size:11px;margin:0 1px 0 2px">&#8225;</b>:12.13 V</div>
<svg class="a" style="left:63px;top:345px" width="5" height="4" viewBox="0 0 5 4" shape-rendering="crispEdges"><path d="M0 4 H5 L3.5 0.5 Z" fill="none" stroke="#000" stroke-width="0.9" shape-rendering="geometricPrecision"/><rect x="0" y="3" width="5" height="1" fill="#000"/></svg><div class="a" style="left:66px;top:351px;width:70px;height:13px;font-size:11px;line-height:13px;white-space:nowrap">V<b style="font-size:11px;margin:0 1px 0 2px">&#8225;</b>:12.13 V</div>
<div class="a" style="left:64px;top:364px;width:72px;height:13px;font-size:11px;line-height:13px;white-space:nowrap;letter-spacing:-0.25px">V<span style="font-size:7px;font-weight:bold;position:relative;top:1px">p-p</span>:-95.26 mV</div>
<svg class="a" style="left:140px;top:72px" width="994" height="761" viewBox="140 72 994 761" shape-rendering="crispEdges">
<rect x="140" y="72" width="994" height="761" fill="#000"/>
<g stroke="#808080" stroke-width="1" stroke-dasharray="1 4">
<line x1="164" y1="96.5" x2="1130" y2="96.5"/><line x1="164" y1="121.5" x2="1130" y2="121.5"/><line x1="164" y1="146.5" x2="1130" y2="146.5"/><line x1="164" y1="171.5" x2="1130" y2="171.5"/><line x1="164" y1="196.5" x2="1130" y2="196.5"/><line x1="164" y1="221.5" x2="1130" y2="221.5"/><line x1="164" y1="246.5" x2="1130" y2="246.5"/><line x1="164" y1="271.5" x2="1130" y2="271.5"/><line x1="164" y1="296.5" x2="1130" y2="296.5"/><line x1="164" y1="321.5" x2="1130" y2="321.5"/><line x1="164" y1="346.5" x2="1130" y2="346.5"/><line x1="164" y1="371.5" x2="1130" y2="371.5"/><line x1="164" y1="396.5" x2="1130" y2="396.5"/><line x1="164" y1="421.5" x2="1130" y2="421.5"/><line x1="164" y1="446.5" x2="1130" y2="446.5"/><line x1="164" y1="471.5" x2="1130" y2="471.5"/><line x1="164" y1="496.5" x2="1130" y2="496.5"/><line x1="164" y1="521.5" x2="1130" y2="521.5"/><line x1="164" y1="546.5" x2="1130" y2="546.5"/><line x1="164" y1="571.5" x2="1130" y2="571.5"/><line x1="164" y1="596.5" x2="1130" y2="596.5"/><line x1="164" y1="621.5" x2="1130" y2="621.5"/><line x1="164" y1="646.5" x2="1130" y2="646.5"/><line x1="164" y1="671.5" x2="1130" y2="671.5"/><line x1="164" y1="696.5" x2="1130" y2="696.5"/><line x1="164" y1="721.5" x2="1130" y2="721.5"/><line x1="164" y1="746.5" x2="1130" y2="746.5"/><line x1="164" y1="771.5" x2="1130" y2="771.5"/><line x1="164" y1="796.5" x2="1130" y2="796.5"/>
<line x1="164.5" y1="76" x2="164.5" y2="797"/><line x1="189.5" y1="76" x2="189.5" y2="797"/><line x1="214.5" y1="76" x2="214.5" y2="797"/><line x1="239.5" y1="76" x2="239.5" y2="797"/><line x1="264.5" y1="76" x2="264.5" y2="797"/><line x1="289.5" y1="76" x2="289.5" y2="797"/><line x1="314.5" y1="76" x2="314.5" y2="797"/><line x1="339.5" y1="76" x2="339.5" y2="797"/><line x1="364.5" y1="76" x2="364.5" y2="797"/><line x1="389.5" y1="76" x2="389.5" y2="797"/><line x1="414.5" y1="76" x2="414.5" y2="797"/><line x1="439.5" y1="76" x2="439.5" y2="797"/><line x1="464.5" y1="76" x2="464.5" y2="797"/><line x1="489.5" y1="76" x2="489.5" y2="797"/><line x1="514.5" y1="76" x2="514.5" y2="797"/><line x1="539.5" y1="76" x2="539.5" y2="797"/><line x1="564.5" y1="76" x2="564.5" y2="797"/><line x1="589.5" y1="76" x2="589.5" y2="797"/><line x1="614.5" y1="76" x2="614.5" y2="797"/><line x1="639.5" y1="76" x2="639.5" y2="797"/><line x1="664.5" y1="76" x2="664.5" y2="797"/><line x1="689.5" y1="76" x2="689.5" y2="797"/><line x1="714.5" y1="76" x2="714.5" y2="797"/><line x1="739.5" y1="76" x2="739.5" y2="797"/><line x1="764.5" y1="76" x2="764.5" y2="797"/><line x1="789.5" y1="76" x2="789.5" y2="797"/><line x1="814.5" y1="76" x2="814.5" y2="797"/><line x1="839.5" y1="76" x2="839.5" y2="797"/><line x1="864.5" y1="76" x2="864.5" y2="797"/><line x1="889.5" y1="76" x2="889.5" y2="797"/><line x1="914.5" y1="76" x2="914.5" y2="797"/><line x1="939.5" y1="76" x2="939.5" y2="797"/><line x1="964.5" y1="76" x2="964.5" y2="797"/><line x1="989.5" y1="76" x2="989.5" y2="797"/><line x1="1014.5" y1="76" x2="1014.5" y2="797"/><line x1="1039.5" y1="76" x2="1039.5" y2="797"/><line x1="1064.5" y1="76" x2="1064.5" y2="797"/><line x1="1089.5" y1="76" x2="1089.5" y2="797"/><line x1="1114.5" y1="76" x2="1114.5" y2="797"/>
</g>
<line x1="189.5" y1="72" x2="189.5" y2="797" stroke="#c8c8c8" stroke-width="1" stroke-dasharray="4 1"/><line x1="189.5" y1="797" x2="189.5" y2="808" stroke="#c8c8c8" stroke-width="1"/>
<line x1="506.5" y1="72" x2="506.5" y2="808" stroke="#c8c8c8" stroke-width="1"/>
<line x1="374.5" y1="72" x2="374.5" y2="812" stroke="#00ffff" stroke-width="1"/>
<path d="M369 833 V815 L374.5 809.5 L380 815 V833 Z" fill="#00ffff" shape-rendering="geometricPrecision"/>
<text x="382" y="831" font-family="Liberation Sans, sans-serif" font-size="12.3" font-weight="bold" fill="#00ffff" shape-rendering="geometricPrecision"><tspan x="382" textLength="63.3" lengthAdjust="spacingAndGlyphs">Зажигание</tspan> <tspan x="451" textLength="56" lengthAdjust="spacingAndGlyphs">включено</tspan></text>
<rect x="184.5" y="808.5" width="11" height="11" rx="1.5" fill="#000" stroke="#d0d0d0" stroke-width="1" shape-rendering="geometricPrecision"/>
<text x="186.3" y="818" font-family="Liberation Sans, sans-serif" font-size="10.5" font-weight="bold" fill="#e0e0e0" shape-rendering="geometricPrecision">B</text>
<path d="M185 820 H196" stroke="#d0d0d0" stroke-width="1" stroke-dasharray="1 1"/>
<path d="M184.5 822 V831 M195.5 821 V831 M186 831.5 H195" fill="none" stroke="#e0e0e0" stroke-width="1" stroke-dasharray="1 1"/>
<path d="M501.5 809 V819 M512.5 809 V819 M503 808.5 H512 M503 819.5 H512" fill="none" stroke="#e0e0e0" stroke-width="1" stroke-dasharray="1 1"/>
<rect x="501.5" y="821.5" width="11" height="11" rx="1.5" fill="none" stroke="#d0d0d0" stroke-width="1" shape-rendering="geometricPrecision"/>
<text x="503.2" y="831" font-family="Liberation Sans, sans-serif" font-size="10.5" font-weight="bold" fill="#b0b0b0" shape-rendering="geometricPrecision">A</text>
<polyline points="164.0,442.5 165.5,441.5 167.0,442.5 168.5,441.5 170.0,442.5 171.5,441.5 173.0,442.5 174.5,441.5 176.0,442.5 177.5,441.5 179.0,441.5 184.0,441.5 184.0,442.5 185.5,441.5 187.0,442.5 188.5,442.5 190.0,441.5 191.5,441.5 203.5,441.5 203.5,441.5 208.5,441.5 208.5,441.5 211.5,441.5 211.5,442.5 213.0,441.5 214.5,441.5 217.5,441.5 217.5,441.5 225.5,441.5 225.5,442.5 227.0,441.5 228.5,442.5 230.0,441.5 231.5,442.5 233.0,442.5 234.5,441.5 236.0,442.5 237.5,441.5 239.0,442.5 240.5,442.5 242.0,441.5 243.5,441.5 251.5,441.5 251.5,441.5 259.5,441.5 259.5,442.5 261.0,441.5 262.5,442.5 264.0,441.5 265.5,442.5 267.0,442.5 268.5,441.5 270.0,441.5 273.0,441.5 273.0,442.5 274.5,441.5 276.0,442.5 277.5,441.5 279.0,442.5 280.5,441.5 282.0,442.5 283.5,441.5 285.0,441.5 293.0,441.5 293.0,442.5 294.5,441.5 296.0,442.5 297.5,442.5 299.0,441.5 300.5,442.5 302.0,441.5 303.5,441.5 306.5,441.5 306.5,442.5 308.0,441.5 309.5,442.5 311.0,441.5 312.5,442.5 314.0,441.5 315.5,441.5 320.5,441.5 320.5,441.5 325.5,441.5 325.5,442.5 327.0,441.5 328.5,441.5 333.5,441.5 333.5,442.5 335.0,441.5 336.5,442.5 338.0,441.5 339.5,442.5 341.0,441.5 342.5,442.5 344.0,441.5 345.5,441.5 348.5,441.5 348.5,442.5 350.0,441.5 351.5,442.5 353.0,441.5 356.0,441.5 356.0,442.5 357.5,441.5 359.0,442.5 360.5,441.5 362.0,441.5 365.0,441.5 365.0,442.5 366.5,441.5 368.0,442.5 369.5,441.5 371.0,442.5 372.5,442.5 374.0,441.5 375.5,442.5 377.0,441.5 389.0,441.5 389.0,442.5 390.5,441.5 392.0,442.5 393.5,441.5 395.0,442.5 396.5,441.5 398.0,442.5 399.5,442.5 401.0,441.5 402.5,442.5 404.0,441.5 405.5,442.5 407.0,441.5 408.5,442.5 410.0,441.5 411.5,441.5 416.5,441.5 416.5,441.5 421.5,441.5 421.5,441.5 429.5,441.5 429.5,441.5 434.5,441.5 434.5,441.5 435.0,441.5 435.0,441.5 435.5,441.5 436.5,427.0 437.5,356.0 438.0,301.5 440.0,297.5 443.0,295.5 447.0,294.3 451.0,293.3 456.0,292.5 462.0,292.0 466.0,291.5 466.0,291.5 471.0,291.5 471.0,291.5 483.0,291.5 483.0,291.5 486.0,291.5 486.0,291.5 489.0,291.5 489.0,291.5 497.0,291.5 497.0,291.5 509.0,291.5 509.0,291.5 521.0,291.5 521.0,291.5 526.0,291.5 526.0,291.5 529.0,291.5 529.0,291.5 541.0,291.5 541.0,291.5 544.0,291.5 544.0,291.5 549.0,291.5 549.0,291.5 552.0,291.5 552.0,291.5 564.0,291.5 564.0,291.5 567.0,291.5 567.0,291.5 575.0,291.5 575.0,291.5 580.0,291.5 580.0,291.5 585.0,291.5 585.0,291.5 593.0,291.5 593.0,291.5 598.0,291.5 598.0,291.5 601.0,291.5 601.0,291.5 609.0,291.5 609.0,291.5 612.0,291.5 612.0,292.5 613.5,291.5 615.0,291.5 623.0,291.5 623.0,291.5 626.0,291.5 626.0,292.5 627.5,291.5 629.0,292.5 630.5,291.5 635.5,291.5 635.5,291.5 643.5,291.5 643.5,291.5 655.5,291.5 655.5,291.5 667.5,291.5 667.5,291.5 670.5,291.5 670.5,291.5 673.5,291.5 673.5,291.5 685.5,291.5 685.5,291.5 688.5,291.5 688.5,291.5 691.5,291.5 691.5,291.5 694.5,291.5 694.5,291.5 706.5,291.5 706.5,291.5 718.5,291.5 718.5,291.5 730.5,291.5 730.5,291.5 733.5,291.5 733.5,291.5 736.5,291.5 736.5,291.5 739.5,291.5 739.5,291.5 744.5,291.5 744.5,291.5 747.5,291.5 747.5,291.5 759.5,291.5 759.5,291.5 762.5,291.5 762.5,291.5 766.0,291.5 766.0,291.5 766.0,292.5 767.5,291.5 769.0,292.5 770.5,291.5 772.0,292.5 773.5,292.5 775.0,291.5 776.5,292.5 778.0,291.5 779.5,292.5 781.0,291.5 782.5,292.5 784.0,291.5 785.5,292.5 787.0,292.5 788.5,291.5 790.0,292.5 791.5,291.5 793.0,291.5 798.0,291.5 798.0,291.5 810.0,291.5 810.0,292.5 811.5,291.5 813.0,292.5 814.5,292.5 816.0,291.5 817.5,292.5 819.0,291.5 820.5,292.5 822.0,291.5 823.5,292.5 825.0,291.5 828.0,291.5 828.0,292.5 829.5,291.5 831.0,292.5 832.5,291.5 844.5,291.5 844.5,292.5 846.0,291.5 847.5,292.5 849.0,291.5 850.5,292.5 852.0,291.5 853.5,292.5 855.0,291.5 856.5,292.5 858.0,291.5 859.5,292.5 861.0,291.5 862.5,292.5 864.0,291.5 865.5,292.5 867.0,292.5 868.5,291.5 870.0,292.5 871.5,292.5 873.0,291.5 874.5,292.5 876.0,291.5 877.5,292.5 879.0,291.5 880.5,292.5 882.0,291.5 883.5,291.5 891.5,291.5 891.5,292.5 893.0,291.5 894.5,291.5 897.5,291.5 897.5,292.5 899.0,291.5 900.5,292.5 902.0,291.5 907.0,291.5 907.0,292.5 908.5,291.5 910.0,292.5 911.5,291.5 913.0,292.5 914.5,291.5 916.0,291.5 919.0,291.5 919.0,292.5 920.5,291.5 922.0,292.5 923.5,291.5 928.5,291.5 928.5,292.5 930.0,291.5 931.5,292.5 933.0,291.5 934.5,292.5 936.0,291.5 937.5,292.5 939.0,291.5 940.5,292.5 942.0,291.5 943.5,292.5 945.0,291.5 946.5,292.5 948.0,291.5 949.5,292.5 950.0,291.5 950.0,291.5 959.5,291.5 960.5,308.0 961.5,331.0 962.5,345.0 964.0,350.5 965.5,356.0 967.4,361.2 969.3,366.5 971.2,370.0 973.1,373.5 975.0,377.0 976.6,379.3 978.3,381.6 980.0,383.9 981.6,386.2 983.3,389.0 984.9,389.8 986.6,391.0 988.2,392.3 989.9,394.1 991.5,396.2 993.1,397.8 994.7,400.9 996.2,400.5 997.8,403.1 999.4,404.7 1001.0,406.3 1002.7,406.4 1004.4,408.4 1006.0,408.5 1007.7,409.6 1009.4,412.6 1011.0,412.7 1012.7,414.7 1014.4,414.8 1016.0,416.7 1017.5,415.7 1019.1,417.1 1020.7,417.6 1022.2,420.5 1023.8,419.4 1025.4,420.9 1027.0,422.3 1028.5,422.8 1030.1,425.2 1031.7,424.6 1033.4,426.9 1035.0,427.8 1036.6,426.7 1038.2,428.1 1039.9,430.4 1041.5,430.3 1043.1,430.7 1044.7,432.1 1046.4,432.9 1048.0,434.8 1049.7,433.9 1051.3,435.0 1053.0,435.1 1054.7,436.3 1056.3,437.9 1058.0,437.0 1059.7,438.1 1061.3,438.8 1063.0,439.4 1064.7,440.1 1066.3,440.8 1068.0,441.4 1068.0,441.5 1134.0,441.5" fill="none" stroke="#ffffff" stroke-width="1"/>
<polyline points="164.0,499.5 167.0,499.5 167.0,499.5 179.0,499.5 179.0,500.5 180.5,499.5 182.0,499.5 194.0,499.5 194.0,499.5 197.0,499.5 197.0,499.5 202.0,499.5 202.0,500.5 203.5,499.5 205.0,500.5 206.5,499.5 208.0,499.5 220.0,499.5 220.0,499.5 232.0,499.5 232.0,499.5 240.0,499.5 240.0,499.5 252.0,499.5 252.0,499.5 255.0,499.5 255.0,499.5 258.0,499.5 258.0,499.5 263.0,499.5 263.0,499.5 266.0,499.5 266.0,500.5 267.5,499.5 269.0,499.5 277.0,499.5 277.0,499.5 285.0,499.5 285.0,499.5 297.0,499.5 297.0,500.5 298.5,499.5 300.0,499.5 308.0,499.5 308.0,499.5 320.0,499.5 320.0,500.5 321.5,499.5 323.0,500.5 324.5,499.5 326.0,499.5 331.0,499.5 331.0,499.5 336.0,499.5 336.0,499.5 341.0,499.5 341.0,499.5 349.0,499.5 349.0,499.5 357.0,499.5 357.0,499.5 362.0,499.5 362.0,499.5 367.0,499.5 367.0,499.5 372.0,499.5 372.0,499.5 377.0,499.5 377.0,499.5 385.0,499.5 385.0,499.5 397.0,499.5 397.0,499.5 409.0,499.5 409.0,499.5 414.0,499.5 414.0,499.5 417.0,499.5 417.0,500.5 418.5,499.5 420.0,500.5 421.5,499.5 425.0,499.5 425.0,499.5 425.5,499.5 426.0,496.0 426.8,487.0 427.8,489.0 428.5,484.8 429.5,485.0 430.0,491.0 431.5,494.0 433.4,496.3 435.5,494.5 438.0,492.0 440.5,490.8 444.0,491.2 445.0,490.6 459.0,490.6 461.0,491.5 464.0,492.5 465.0,496.0 466.0,493.5 467.0,496.5 468.0,496.7 470.9,499.4 473.8,496.2 475.7,499.9 477.6,496.7 479.5,499.9 481.4,496.2 483.3,498.7 485.2,496.2 487.1,499.4 489.0,496.7 490.9,499.9 492.8,496.7 494.7,499.9 497.1,495.8 500.0,499.4 502.4,496.2 505.3,499.4 507.2,496.7 509.1,499.2 511.5,495.8 513.4,499.4 515.8,496.2 518.7,499.2 520.6,496.7 522.5,498.7 524.9,496.2 527.8,499.4 529.7,496.0 531.6,499.2 534.0,496.2 535.9,499.4 538.3,496.2 540.7,499.2 542.6,496.7 544.5,499.4 546.9,496.7 548.8,499.4 551.7,496.7 553.6,499.4 555.5,496.0 557.4,499.9 560.3,496.2 563.2,498.7 565.6,495.8 567.5,498.7 569.9,496.7 571.8,498.7 573.7,496.0 576.1,499.9 579.0,496.7 580.9,499.9 582.8,496.7 584.7,499.4 586.6,496.0 589.5,499.9 592.4,496.7 594.8,498.7 597.7,496.7 600.1,499.2 602.5,495.8 604.4,499.9 607.3,496.7 609.7,499.9 612.1,496.0 615.0,499.9 617.9,496.0 619.8,499.4 622.2,496.0 625.1,499.4 627.0,496.7 628.9,499.2 631.8,496.7 633.7,499.9 636.1,496.7 638.0,499.9 639.9,496.0 641.8,499.2 644.2,495.8 646.1,499.2 648.0,496.7 650.4,499.2 652.3,496.7 654.2,499.9 656.6,496.7 658.5,498.7 660.4,496.2 662.3,499.4 664.7,496.2 667.1,499.9 670.0,496.0 672.9,499.9 674.8,496.2 676.7,499.2 678.6,495.8 680.5,499.4 683.4,496.0 685.3,499.4 688.2,496.2 690.1,499.2 692.0,496.2 694.9,499.2 696.8,496.7 698.7,499.4 700.6,495.8 702.5,498.7 704.4,496.2 707.3,499.4 709.2,496.7 711.1,499.2 713.0,495.8 715.4,499.4 717.3,496.0 719.2,499.9 721.1,496.7 723.0,499.9 725.9,496.2 728.3,499.9 730.2,495.8 732.1,499.4 734.0,496.0 735.9,499.2 738.3,496.0 741.2,498.7 743.6,496.0 745.5,498.7 747.9,495.8 750.3,499.4 752.2,496.7 754.1,499.2 757.0,496.7 758.9,499.9 760.8,496.0 762.7,499.2 764.6,496.0 766.5,498.7 768.4,495.8 771.3,499.4 773.7,496.0 776.1,499.4 778.0,495.8 780.9,499.2 782.8,496.0 784.7,498.7 786.6,495.8 789.5,499.9 791.4,496.0 793.8,499.2 796.7,496.2 798.6,498.7 801.0,496.0 802.9,499.2 805.8,496.7 808.7,499.2 811.6,496.0 813.5,499.9 815.4,496.0 818.3,498.7 820.2,496.7 822.1,498.7 824.0,496.7 825.9,499.2 827.8,495.8 829.7,499.2 832.1,496.0 834.5,499.9 836.4,496.0 838.3,499.2 840.7,495.8 843.6,498.7 846.5,496.7 848.9,499.4 850.8,495.8 852.7,499.9 855.6,496.7 858.5,499.4 860.4,496.7 862.8,499.9 864.7,496.2 866.6,499.9 868.5,496.0 870.4,499.9 872.8,496.0 874.7,498.7 877.1,496.0 879.0,499.4 880.9,496.2 882.8,499.9 884.7,495.8 886.6,499.4 888.5,496.2 890.4,499.4 892.3,496.2 895.2,499.9 898.1,496.2 900.5,499.2 902.4,495.8 904.3,499.4 907.2,495.8 909.1,499.9 911.5,496.0 914.4,498.7 916.8,496.2 919.2,498.7 921.1,496.2 923.5,499.4 925.4,496.2 927.3,499.9 929.2,495.8 931.1,499.9 934.0,496.2 936.4,499.2 938.3,496.2 940.2,499.2 943.1,496.0 946.0,498.7 947.9,496.2 949.8,499.2 951.7,496.2 953.6,499.4 955.5,496.7 957.9,499.9 959.8,496.0 961.7,499.2 964.1,496.2 966.0,499.9 967.9,496.7 970.8,499.9 973.7,495.8 975.6,499.4 977.5,496.0 979.9,498.7 982.8,496.0 985.2,498.7 987.1,496.7 989.0,498.7 991.4,495.8 993.3,499.9 995.2,495.8 997.6,499.2 999.5,496.7 1001.9,498.7 1003.8,496.2 1005.7,499.9 1008.6,496.0 1010.5,499.9 1013.4,496.7 1015.3,499.2 1017.2,495.8 1019.1,499.4 1021.0,496.0 1023.9,499.9 1025.8,495.8 1028.2,498.7 1030.1,496.2 1033.0,498.7 1034.9,496.2 1036.8,499.2 1039.2,496.7 1041.6,498.7 1043.5,496.2 1045.4,499.2 1047.3,495.8 1049.7,498.7 1051.6,495.8 1054.5,499.2 1056.4,496.2 1058.8,499.9 1060.7,495.8 1063.6,498.7 1066.0,496.0 1067.9,498.7 1069.8,496.0 1071.7,499.4 1073.6,495.8 1075.5,499.9 1077.4,496.0 1079.3,498.7 1082.2,496.2 1084.1,499.4 1087.0,496.2 1088.9,499.2 1091.8,496.2 1094.7,499.2 1097.6,496.7 1099.5,498.7 1101.4,496.2 1103.8,499.9 1105.7,496.0 1107.6,499.4 1109.5,495.8 1111.4,499.9 1113.3,496.2 1116.2,498.7 1119.1,496.0 1121.0,499.4 1123.9,496.2 1125.8,498.7 1127.7,496.0 1129.6,499.4 1131.5,496.2" fill="none" stroke="#ffc080" stroke-width="1"/>
<polyline points="164.0,626.5 426.0,626.5 427.2,620.0 428.2,609.6 429.2,601.0 430.1,592.7 431.5,584.5 432.9,577.6 434.3,572.5 435.8,568.2 437.2,565.0 438.6,562.2 440.5,559.8 442.4,558.3 445.5,556.8 448.9,555.8 455.0,555.5 462.1,555.5 464.0,557.0 465.2,560.0 466.0,557.5 467.0,561.5 468.0,560.3 470.4,562.3 472.8,559.9 474.7,562.9 477.1,560.3 479.0,562.7 481.4,559.5 483.3,562.7 486.2,559.5 488.1,563.4 490.0,559.7 492.9,562.7 494.8,559.9 497.7,562.9 499.6,560.3 501.5,563.4 503.9,560.3 506.3,562.9 508.7,559.5 510.6,563.4 513.0,559.5 515.4,562.3 518.3,560.3 521.2,562.9 524.1,559.5 526.5,562.3 528.4,560.3 530.3,563.4 532.7,559.7 534.6,562.3 536.5,560.3 538.9,562.7 541.8,559.5 543.7,563.4 545.6,559.9 548.5,562.9 550.9,559.9 552.8,562.9 555.7,559.5 558.6,562.7 560.5,559.5 563.4,562.3 565.3,560.3 568.2,562.7 570.1,559.5 572.0,562.9 573.9,559.7 575.8,562.9 577.7,560.3 580.1,563.4 583.0,559.5 584.9,562.9 587.8,559.9 589.7,562.9 591.6,559.5 593.5,562.9 595.4,559.5 597.3,563.4 599.2,559.9 601.1,562.3 603.0,559.7 604.9,563.4 606.8,559.9 609.7,562.7 612.6,559.9 614.5,562.3 616.4,559.7 618.3,562.9 620.7,559.9 622.6,563.4 625.0,560.3 626.9,562.7 628.8,560.3 630.7,562.9 632.6,559.9 635.5,562.9 637.4,559.7 640.3,562.3 643.2,559.9 645.1,562.7 647.0,559.7 648.9,562.3 651.3,560.3 653.7,562.3 656.6,560.3 658.5,562.9 661.4,559.7 663.8,562.3 665.7,559.7 667.6,562.7 669.5,559.7 672.4,562.3 674.3,559.9 676.2,563.4 679.1,559.5 681.0,563.4 682.9,559.9 684.8,562.9 686.7,559.5 688.6,562.9 691.5,559.9 694.4,562.7 696.3,559.5 698.2,563.4 701.1,559.7 703.0,562.9 705.4,559.9 708.3,563.4 710.2,560.3 712.1,562.3 715.0,559.5 716.9,562.9 718.8,560.3 721.7,563.4 724.1,559.5 726.0,562.3 727.9,560.3 729.8,562.7 732.7,559.9 734.6,562.9 737.0,560.3 738.9,562.9 741.8,559.5 743.7,562.7 746.1,559.7 748.0,562.7 750.4,559.5 752.3,562.9 754.7,559.5 756.6,562.7 758.5,559.9 760.9,562.7 762.8,559.5 765.7,562.3 767.6,559.9 770.0,562.7 771.9,559.5 774.8,562.9 777.2,559.5 779.1,562.3 782.0,559.9 783.9,562.9 785.8,559.9 788.2,563.4 790.1,559.9 792.0,562.9 793.9,559.9 795.8,562.7 798.2,560.3 800.1,562.7 802.5,559.5 804.4,563.4 806.8,560.3 808.7,563.4 810.6,559.9 812.5,562.7 814.9,559.9 817.3,562.7 820.2,559.5 822.1,563.4 824.5,559.5 826.4,563.4 828.3,559.5 830.7,562.3 832.6,559.7 834.5,562.9 837.4,560.3 840.3,562.7 842.2,559.5 845.1,562.7 847.0,560.3 848.9,562.3 850.8,559.7 852.7,562.7 854.6,560.3 856.5,563.4 858.9,560.3 861.3,562.9 863.2,560.3 865.1,563.4 868.0,559.9 870.4,562.3 872.3,559.9 875.2,562.7 877.1,559.9 879.0,563.4 881.4,559.5 884.3,562.7 887.2,559.7 889.1,563.4 891.5,559.9 893.4,562.9 896.3,559.5 898.7,562.7 901.1,559.7 903.0,562.3 904.9,559.7 906.8,562.7 908.7,560.3 910.6,563.4 913.5,560.3 915.4,562.3 917.3,559.7 919.2,562.9 921.1,559.7 923.0,563.4 924.9,559.5 927.3,562.3 929.7,559.5 931.6,562.9 934.0,559.7 935.9,562.7 938.3,559.9 940.7,562.7 942.6,559.9 945.5,562.3 947.4,559.5 949.3,563.4 952.2,559.7 955.1,562.9 957.0,559.5 958.9,562.9 960.8,559.5 962.7,562.3 965.1,559.5 968.0,562.9 970.4,559.7 972.3,562.3 974.2,560.3 976.1,562.9 978.0,559.7 979.9,562.7 982.3,559.5 985.2,562.9 987.1,560.3 990.0,562.7 991.9,560.3 994.8,563.4 997.7,559.5 999.6,562.9 1001.5,559.5 1003.9,563.4 1006.3,560.3 1008.2,562.9 1010.1,559.5 1012.0,563.4 1013.9,559.9 1016.8,562.7 1018.7,559.9 1020.6,562.7 1022.5,560.3 1025.4,563.4 1027.3,559.9 1030.2,563.4 1033.1,560.3 1036.0,562.9 1037.9,559.7 1039.8,562.3 1041.7,559.9 1044.1,562.7 1046.0,559.9 1047.9,562.9 1050.8,559.5 1053.7,562.9 1055.6,559.5 1057.5,562.9 1060.4,559.5 1062.3,562.7 1064.2,559.7 1066.1,562.7 1068.0,560.3 1069.9,562.9 1071.8,559.5 1074.7,563.4 1076.6,559.9 1079.5,563.4 1081.9,560.3 1083.8,562.9 1086.2,559.5 1088.1,562.9 1090.0,559.7 1091.9,562.9 1093.8,559.9 1096.7,563.4 1098.6,559.7 1100.5,562.7 1102.4,559.5 1105.3,562.9 1107.2,559.9 1109.1,563.4 1112.0,559.9 1113.9,562.9 1116.3,559.7 1118.7,563.4 1120.6,560.3 1122.5,562.3 1124.4,559.9 1126.3,562.9 1129.2,560.3 1131.6,562.9 1133.5,559.5" fill="none" stroke="#ffff80" stroke-width="1"/>
<polyline points="164.0,674.5 425.5,674.5 426.5,672.0 427.3,668.5 428.2,665.2 429.5,662.8 431.0,661.6 433.0,661.0 434.8,660.5 436.5,659.0 438.0,657.5 439.5,656.7 444.0,656.0 449.0,655.5 452.0,656.0 455.0,655.4 460.2,655.6 462.5,657.0 464.2,659.5 465.0,661.5 466.0,659.0 467.0,663.5 468.0,661.6 469.9,665.0 472.3,661.6 474.2,665.5 477.1,661.4 479.0,665.5 480.9,661.6 482.8,665.5 484.7,662.3 487.6,665.0 490.0,661.4 491.9,664.8 493.8,662.3 495.7,664.8 497.6,661.4 499.5,665.0 501.4,662.3 503.8,664.8 505.7,661.6 508.6,664.3 510.5,662.3 512.4,665.0 514.3,662.3 516.2,665.0 518.6,661.8 520.5,665.5 522.9,662.3 525.3,665.0 528.2,661.4 531.1,664.3 533.0,661.6 534.9,664.8 536.8,661.8 539.2,664.3 541.1,662.3 543.0,664.3 544.9,661.6 546.8,664.3 549.7,661.6 551.6,665.5 553.5,661.8 555.4,665.0 557.3,661.6 559.2,665.5 561.6,661.6 564.5,664.3 566.9,661.4 569.3,665.0 572.2,662.3 574.1,664.8 576.0,661.6 578.4,665.0 581.3,661.6 583.2,665.5 585.1,661.6 587.0,664.3 588.9,662.3 590.8,665.0 592.7,661.8 594.6,664.3 596.5,661.6 598.4,664.8 600.3,662.3 602.2,664.8 604.1,661.6 606.0,665.5 607.9,662.3 610.3,664.3 612.7,662.3 614.6,664.8 616.5,661.8 618.4,664.3 621.3,662.3 624.2,665.0 626.6,661.4 628.5,665.5 630.9,661.8 632.8,664.3 635.2,661.6 637.1,665.0 640.0,662.3 641.9,665.5 643.8,661.8 646.7,665.0 649.1,661.4 652.0,664.3 653.9,661.4 656.3,665.5 658.7,661.4 661.6,664.8 664.0,662.3 666.9,664.3 669.8,661.4 672.2,665.0 675.1,662.3 678.0,664.3 679.9,661.8 682.8,665.5 684.7,661.6 687.6,665.0 689.5,661.4 692.4,665.5 694.3,661.8 696.7,664.3 698.6,661.8 700.5,664.3 702.4,661.6 704.3,664.3 706.2,662.3 708.1,665.0 711.0,661.6 713.4,664.8 716.3,662.3 718.7,664.8 721.1,661.6 723.0,664.3 724.9,661.4 727.3,664.8 729.2,661.4 731.1,664.3 733.0,661.6 734.9,664.3 736.8,662.3 738.7,664.8 740.6,662.3 743.0,664.8 745.9,661.4 747.8,665.5 750.2,662.3 752.1,664.8 755.0,661.6 756.9,665.5 759.3,662.3 761.2,665.0 763.1,661.8 765.0,664.8 766.9,661.8 769.8,665.5 771.7,661.8 773.6,664.3 775.5,661.6 778.4,665.0 780.3,661.8 782.2,664.3 784.1,661.6 786.0,665.5 787.9,661.8 789.8,665.0 792.2,661.6 795.1,665.5 797.0,661.4 798.9,664.3 800.8,661.6 803.7,665.5 805.6,661.4 808.5,664.3 810.4,662.3 812.3,664.3 814.7,661.8 817.1,665.5 819.0,661.4 821.9,664.8 824.3,662.3 826.2,665.5 828.1,661.6 831.0,665.5 832.9,661.6 834.8,664.8 836.7,661.4 838.6,664.8 841.5,661.6 843.9,665.5 845.8,661.6 847.7,664.3 850.6,662.3 853.0,664.8 854.9,661.6 856.8,665.0 858.7,661.6 860.6,664.8 863.0,662.3 864.9,664.8 867.3,661.6 869.7,664.3 871.6,662.3 874.0,665.5 875.9,662.3 877.8,664.3 880.2,661.4 882.1,664.8 884.5,661.6 886.4,665.5 888.3,662.3 890.2,664.8 893.1,661.6 895.5,664.3 897.9,661.4 899.8,664.3 901.7,661.6 903.6,664.3 905.5,661.4 908.4,664.3 910.3,661.6 913.2,664.3 915.1,661.8 917.0,664.3 919.9,661.6 921.8,665.0 923.7,661.8 926.6,665.5 929.0,662.3 930.9,665.5 932.8,662.3 935.2,664.8 937.1,661.8 939.0,664.8 941.4,662.3 943.8,664.3 945.7,661.8 947.6,665.5 949.5,661.6 952.4,664.3 954.8,662.3 957.2,665.0 960.1,662.3 962.5,665.5 964.4,662.3 966.3,665.0 969.2,662.3 971.6,665.0 974.0,661.8 976.9,664.8 979.8,662.3 982.2,665.0 984.1,661.6 986.0,665.0 987.9,661.4 990.3,665.5 992.2,661.4 994.1,665.5 996.0,662.3 997.9,664.3 999.8,661.4 1002.7,665.0 1005.1,661.8 1007.0,665.0 1008.9,661.6 1010.8,665.5 1012.7,661.4 1014.6,665.0 1017.0,662.3 1018.9,665.0 1020.8,661.6 1023.7,665.0 1025.6,661.8 1028.5,664.3 1030.4,661.8 1032.8,664.3 1035.7,661.6 1037.6,664.3 1039.5,661.6 1042.4,665.0 1044.8,661.6 1047.2,664.3 1049.1,662.3 1051.0,665.5 1052.9,661.6 1054.8,664.3 1056.7,661.8 1058.6,665.0 1060.5,662.3 1062.9,664.3 1065.3,662.3 1068.2,664.8 1070.1,662.3 1073.0,664.8 1075.9,662.3 1078.3,665.5 1080.2,662.3 1082.1,664.3 1084.5,661.8 1086.9,665.5 1089.3,662.3 1091.7,665.0 1093.6,662.3 1095.5,664.3 1097.4,661.4 1099.3,664.3 1101.2,662.3 1103.6,665.0 1106.5,661.8 1108.4,664.8 1110.3,661.4 1112.7,664.3 1115.1,661.4 1117.0,665.5 1119.4,661.4 1121.8,665.5 1123.7,661.8 1126.6,665.0 1128.5,662.3 1130.4,664.8 1132.3,661.4" fill="none" stroke="#80ff80" stroke-width="1"/>
<text x="142.3" y="446.6" font-family="Liberation Sans, sans-serif" font-size="12.5" fill="#ffffff" stroke="#ffffff" stroke-width="0.35" shape-rendering="geometricPrecision">1</text><rect x="150" y="442" width="4" height="1" fill="#ffffff"/><path d="M153 439 L161.5 442.5 L153 446 Z" fill="#ffffff" shape-rendering="geometricPrecision"/>
<text x="142.3" y="506.6" font-family="Liberation Sans, sans-serif" font-size="12.5" fill="#ffc080" stroke="#ffc080" stroke-width="0.35" shape-rendering="geometricPrecision">2</text><rect x="150" y="502" width="4" height="1" fill="#ffc080"/><path d="M153 499 L161.5 502.5 L153 506 Z" fill="#ffc080" shape-rendering="geometricPrecision"/>
<text x="142.3" y="631.6" font-family="Liberation Sans, sans-serif" font-size="12.5" fill="#ffff80" stroke="#ffff80" stroke-width="0.35" shape-rendering="geometricPrecision">3</text><rect x="150" y="627" width="4" height="1" fill="#ffff80"/><path d="M153 624 L161.5 627.5 L153 631 Z" fill="#ffff80" shape-rendering="geometricPrecision"/>
<text x="142.3" y="679.6" font-family="Liberation Sans, sans-serif" font-size="12.5" fill="#80ff80" stroke="#80ff80" stroke-width="0.35" shape-rendering="geometricPrecision">4</text><rect x="150" y="675" width="4" height="1" fill="#80ff80"/><path d="M153 672 L161.5 675.5 L153 679 Z" fill="#80ff80" shape-rendering="geometricPrecision"/>
</svg>
<div class="a" style="left:140px;top:833px;width:994px;height:17px;background:linear-gradient(to bottom,#fdfdfa 0,#f3f1ec 1px,#f3f1ec 6px,#f9f8f4 8px,#fefefb 10px,#fefefb 15.5px,#eeede5 17px)"></div>
<div class="a" style="left:140px;top:833px;width:17px;height:17px;border:1px solid #fff;border-radius:3px;box-shadow:inset 0 0 0 1px #b7cbf7;background:linear-gradient(to bottom,#cddafd 0,#c3d3fc 45%,#b7c8f5 80%,#a9baea 100%)"><svg class="a" style="left:3px;top:3px" width="8" height="10" viewBox="0 0 8 10"><path d="M6 1 L2 5 L6 9" fill="none" stroke="#4d6185" stroke-width="2"/></svg></div>
<div class="a" style="left:157px;top:833px;width:162px;height:17px;border:1px solid #fff;border-radius:3px;box-shadow:inset 0 0 0 1px #b7cbf7;background:linear-gradient(to bottom,#cddafd 0,#c3d3fc 45%,#b7c8f5 80%,#a9baea 100%)"><svg class="a" style="left:75px;top:4px" width="9" height="8" viewBox="0 0 9 8" shape-rendering="crispEdges"><rect x="0" y="0" width="1" height="7" fill="#eef4fe"/><rect x="1" y="1" width="1" height="7" fill="#8cb0f8"/><rect x="2" y="0" width="1" height="7" fill="#eef4fe"/><rect x="3" y="1" width="1" height="7" fill="#8cb0f8"/><rect x="4" y="0" width="1" height="7" fill="#eef4fe"/><rect x="5" y="1" width="1" height="7" fill="#8cb0f8"/><rect x="6" y="0" width="1" height="7" fill="#eef4fe"/><rect x="7" y="1" width="1" height="7" fill="#8cb0f8"/></svg></div>
<div class="a fw" style="left:143px;top:79px;width:229px;height:93px;background:#7a96df">
<div class="a" style="left:0;top:0;width:229px;height:21px;background:linear-gradient(to bottom,#7d99e1 0,#92acea 2px,#86a2e6 4px,#7a96df 9px,#7691dc 21px)"></div>
<div class="a" style="left:0;top:0;width:2px;height:93px;background:linear-gradient(to right,#8a8fe0,#7a96df)"></div>
<div class="a" style="left:5px;top:6px;font-size:11px;line-height:13px;font-weight:bold;color:#dbe6f9;white-space:nowrap;letter-spacing:0.8px;-webkit-text-stroke:0.12px #dbe6f9">Напряжение</div>
<div class="a" style="left:195px;top:4px;width:15px;height:15px;border:1px solid #fdfbf0;border-radius:1px;box-shadow:inset 0 0 0 1px #f1f3fb;background:linear-gradient(135deg,#cbdafc 0,#b3c8f8 50%,#a0b8f2 100%)"><svg class="a" style="left:2px;top:3px" width="9" height="7" viewBox="0 0 9 7"><path d="M0.8 1.2 L4.5 5 L8.2 1.2" fill="none" stroke="#3f5380" stroke-width="2"/></svg></div>
<div class="a" style="left:211px;top:4px;width:14px;height:15px;border:1px solid #fff;border-radius:3px;background:linear-gradient(135deg,#e8836a 0,#d9482a 45%,#c02a0c 100%)"><svg class="a" style="left:2px;top:3px" width="8" height="8" viewBox="0 0 8 8"><path d="M1 1 L7 7 M7 1 L1 7" fill="none" stroke="#fff" stroke-width="2"/></svg></div>
<div class="a" style="left:3px;top:21px;width:223px;height:69px;background:#ECE9D8"></div>
<div class="a" style="left:6px;top:24px;width:22px;height:25px;background:#e1ffdc;border-top:1px solid #aca899;border-left:1px solid #aca899;border-bottom:1px solid #fff;border-right:1px solid #fff;font-size:23.4px;line-height:24px;text-align:center;padding-top:0px">1</div>
<div class="a" style="left:20px;top:32px;width:28px;font-size:14px;line-height:14px;font-weight:bold;-webkit-text-stroke:0.5px #000;white-space:nowrap;transform-origin:100% 50%;transform:scaleX(1.12);text-align:right">A:</div>
<div class="a" style="left:8px;top:61px;width:40px;font-size:14px;line-height:14px;font-weight:bold;-webkit-text-stroke:0.5px #000;white-space:nowrap;transform-origin:100% 50%;transform:scaleX(1.12);text-align:right">A-B:</div>
<div class="a" style="left:53px;top:21px;width:171px;height:33px;background:#e1ffdc;border-top:1px solid #aca899;border-left:1px solid #aca899;border-bottom:1px solid #fff;border-right:1px solid #fff;font-size:23.4px;line-height:31px;padding-top:1px;text-align:center;white-space:nowrap">12.08 В</div>
<div class="a" style="left:53px;top:54px;width:171px;height:33px;background:#e1ffdc;border-top:1px solid #aca899;border-left:1px solid #aca899;border-bottom:1px solid #fff;border-right:1px solid #fff;font-size:23.4px;line-height:31px;padding-top:1px;text-align:center;white-space:nowrap">12.08 В</div>
</div>
<div class="a fw" style="left:607px;top:98px;width:229px;height:93px;background:#7a96df">
<div class="a" style="left:0;top:0;width:229px;height:21px;background:linear-gradient(to bottom,#7d99e1 0,#92acea 2px,#86a2e6 4px,#7a96df 9px,#7691dc 21px)"></div>
<div class="a" style="left:0;top:0;width:2px;height:93px;background:linear-gradient(to right,#8a8fe0,#7a96df)"></div>
<div class="a" style="left:5px;top:6px;font-size:11px;line-height:13px;font-weight:bold;color:#dbe6f9;white-space:nowrap;letter-spacing:0.8px;-webkit-text-stroke:0.12px #dbe6f9">Напряжение</div>
<div class="a" style="left:195px;top:4px;width:15px;height:15px;border:1px solid #fdfbf0;border-radius:1px;box-shadow:inset 0 0 0 1px #f1f3fb;background:linear-gradient(135deg,#cbdafc 0,#b3c8f8 50%,#a0b8f2 100%)"><svg class="a" style="left:2px;top:3px" width="9" height="7" viewBox="0 0 9 7"><path d="M0.8 1.2 L4.5 5 L8.2 1.2" fill="none" stroke="#3f5380" stroke-width="2"/></svg></div>
<div class="a" style="left:211px;top:4px;width:14px;height:15px;border:1px solid #fff;border-radius:3px;background:linear-gradient(135deg,#e8836a 0,#d9482a 45%,#c02a0c 100%)"><svg class="a" style="left:2px;top:3px" width="8" height="8" viewBox="0 0 8 8"><path d="M1 1 L7 7 M7 1 L1 7" fill="none" stroke="#fff" stroke-width="2"/></svg></div>
<div class="a" style="left:3px;top:21px;width:223px;height:69px;background:#ECE9D8"></div>
<div class="a" style="left:6px;top:24px;width:22px;height:25px;background:#e1ffdc;border-top:1px solid #aca899;border-left:1px solid #aca899;border-bottom:1px solid #fff;border-right:1px solid #fff;font-size:23.4px;line-height:24px;text-align:center;padding-top:0px">3</div>
<div class="a" style="left:20px;top:32px;width:28px;font-size:14px;line-height:14px;font-weight:bold;-webkit-text-stroke:0.5px #000;white-space:nowrap;transform-origin:100% 50%;transform:scaleX(1.12);text-align:right">A:</div>
<div class="a" style="left:8px;top:61px;width:40px;font-size:14px;line-height:14px;font-weight:bold;-webkit-text-stroke:0.5px #000;white-space:nowrap;transform-origin:100% 50%;transform:scaleX(1.12);text-align:right">A-B:</div>
<div class="a" style="left:53px;top:21px;width:171px;height:33px;background:#e1ffdc;border-top:1px solid #aca899;border-left:1px solid #aca899;border-bottom:1px solid #fff;border-right:1px solid #fff;font-size:23.4px;line-height:31px;padding-top:1px;text-align:center;white-space:nowrap">0.518 В</div>
<div class="a" style="left:53px;top:54px;width:171px;height:33px;background:#e1ffdc;border-top:1px solid #aca899;border-left:1px solid #aca899;border-bottom:1px solid #fff;border-right:1px solid #fff;font-size:23.4px;line-height:31px;padding-top:1px;text-align:center;white-space:nowrap">0.517 В</div>
</div>

</div>
</body></html>
